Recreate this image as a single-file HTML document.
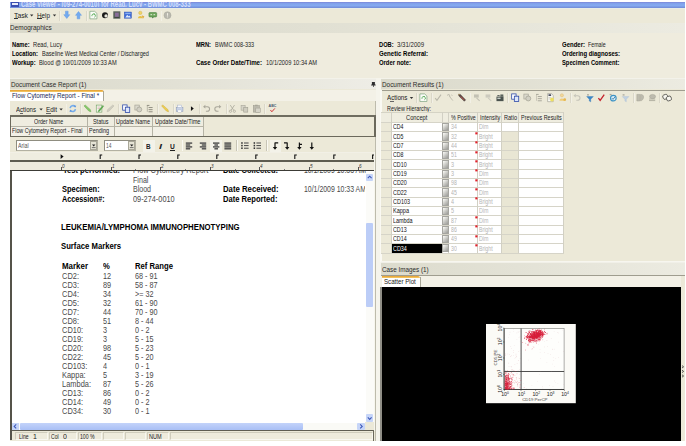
<!DOCTYPE html>
<html><head><meta charset="utf-8"><title>Case Viewer</title>
<style>
html,body{margin:0;padding:0;background:#fff;}
body{width:686px;height:446px;position:relative;overflow:hidden;font-family:"Liberation Sans", sans-serif;}
#app div{position:absolute;box-sizing:border-box;}
#app svg{position:absolute;overflow:visible;}
.t{position:absolute;white-space:nowrap;transform-origin:0 50%;display:block;}
</style></head><body><div id="app">
<div style="left:10px;top:2px;width:675px;height:438.6px;background:#ECE9D8;"></div>
<div style="left:10px;top:2px;width:675px;height:6px;background:linear-gradient(#7A86D8 0%,#82A4EC 28%,#84AAF0 62%,#7089D6 100%);"></div>
<div style="left:10px;top:2px;width:675px;height:5.4px;overflow:hidden;background:transparent">
<span class="t" style="left:11px;top:-3px;font-size:8.4px;line-height:10px;font-weight:bold;color:#D4DEFA;transform:scaleX(0.713)">Case Viewer - [09-274-0010] for Read, Lucy - BWMC 008-333</span></div>
<div style="left:11px;top:2px;width:8px;height:5px;background:#3A4FB0;"></div>
<div style="left:12px;top:3px;width:6px;height:2px;background:#E8ECFA;"></div>
<div style="left:10px;top:8px;width:675px;height:1px;background:#E9EDE4;"></div>
<span class="t" id="t0" style="left:14.00px;top:11.00px;font-size:7.6px;line-height:9.12px;color:#222;transform:scaleX(0.8969);">Task</span>
<span class="t" id="t1" style="left:37.40px;top:11.00px;font-size:7.6px;line-height:9.12px;color:#222;transform:scaleX(0.8328);">Help</span>
<div style="left:14px;top:18.3px;width:4px;height:0.8px;background:#333;"></div>
<div style="left:37.4px;top:18.3px;width:4.5px;height:0.8px;background:#333;"></div>
<svg style="left:0;top:0" width="686" height="30"><path d="M30 14.6h3.4l-1.7 2z M52.8 14.6h3.4l-1.7 2z" fill="#333"/></svg>
<div style="left:59.4px;top:10.5px;width:1px;height:10px;background:#DBD8C9;"></div>
<div style="left:60.199999999999996px;top:10.5px;width:1px;height:10px;background:#F2F0E6;"></div>
<div style="left:85.8px;top:10.5px;width:1px;height:10px;background:#DBD8C9;"></div>
<div style="left:86.6px;top:10.5px;width:1px;height:10px;background:#F2F0E6;"></div>
<div style="left:160.6px;top:10.5px;width:1px;height:10px;background:#DBD8C9;"></div>
<div style="left:161.4px;top:10.5px;width:1px;height:10px;background:#F2F0E6;"></div>
<div style="left:10px;top:23px;width:675px;height:9.6px;background:linear-gradient(90deg,#DAD9CB 0%,#E1E0D3 45%,#ECEBE1 100%);"></div>
<span class="t" id="t2" style="left:10.40px;top:23.00px;font-size:7.8px;line-height:9.36px;color:#2a2a2a;transform:scaleX(0.8282);">Demographics</span>
<div style="left:10px;top:32.6px;width:675px;height:45.6px;background:#EFECDE;"></div>
<span class="t" id="t3" style="left:12.40px;top:41.00px;font-size:6.7px;line-height:8.04px;color:#000;font-weight:bold;transform:scaleX(0.8614);">Name:</span>
<span class="t" id="t4" style="left:33.00px;top:41.00px;font-size:6.7px;line-height:8.04px;color:#222;transform:scaleX(0.8577);">Read, Lucy</span>
<span class="t" id="t5" style="left:12.40px;top:50.00px;font-size:6.7px;line-height:8.04px;color:#000;font-weight:bold;transform:scaleX(0.8648);">Location:</span>
<span class="t" id="t6" style="left:42.00px;top:50.00px;font-size:6.7px;line-height:8.04px;color:#222;transform:scaleX(0.8296);">Baseline West Medical Center / Discharged</span>
<span class="t" id="t7" style="left:12.40px;top:59.00px;font-size:6.7px;line-height:8.04px;color:#000;font-weight:bold;transform:scaleX(0.8749);">Workup:</span>
<span class="t" id="t8" style="left:39.40px;top:59.00px;font-size:6.7px;line-height:8.04px;color:#222;transform:scaleX(0.8517);">Blood @ 10/01/2009 10:33 AM</span>
<span class="t" id="t9" style="left:196.00px;top:41.00px;font-size:6.7px;line-height:8.04px;color:#000;font-weight:bold;transform:scaleX(0.8595);">MRN:</span>
<span class="t" id="t10" style="left:215.00px;top:41.00px;font-size:6.7px;line-height:8.04px;color:#222;transform:scaleX(0.8205);">BWMC 008-333</span>
<span class="t" id="t11" style="left:196.00px;top:59.00px;font-size:6.7px;line-height:8.04px;color:#000;font-weight:bold;transform:scaleX(0.9178);">Case Order Date/Time:</span>
<span class="t" id="t12" style="left:266.00px;top:59.00px;font-size:6.7px;line-height:8.04px;color:#222;transform:scaleX(0.8526);">10/1/2009 10:34 AM</span>
<span class="t" id="t13" style="left:379.00px;top:41.00px;font-size:6.7px;line-height:8.04px;color:#000;font-weight:bold;transform:scaleX(0.8550);">DOB:</span>
<span class="t" id="t14" style="left:397.00px;top:41.00px;font-size:6.7px;line-height:8.04px;color:#222;transform:scaleX(0.9080);">3/31/2009</span>
<span class="t" id="t15" style="left:379.00px;top:50.00px;font-size:6.7px;line-height:8.04px;color:#000;font-weight:bold;transform:scaleX(0.9099);">Genetic Referral:</span>
<span class="t" id="t16" style="left:379.00px;top:59.00px;font-size:6.7px;line-height:8.04px;color:#000;font-weight:bold;transform:scaleX(0.8795);">Order note:</span>
<span class="t" id="t17" style="left:562.00px;top:41.00px;font-size:6.7px;line-height:8.04px;color:#000;font-weight:bold;transform:scaleX(0.8979);">Gender:</span>
<span class="t" id="t18" style="left:588.00px;top:41.00px;font-size:6.7px;line-height:8.04px;color:#222;transform:scaleX(0.7896);">Female</span>
<span class="t" id="t19" style="left:562.00px;top:50.00px;font-size:6.7px;line-height:8.04px;color:#000;font-weight:bold;transform:scaleX(0.8877);">Ordering diagnoses:</span>
<span class="t" id="t20" style="left:562.00px;top:59.00px;font-size:6.7px;line-height:8.04px;color:#000;font-weight:bold;transform:scaleX(0.8636);">Specimen Comment:</span>
<div style="left:10px;top:78.4px;width:367px;height:11px;background:linear-gradient(90deg,#DAD9CB 0%,#E2E1D5 45%,#EEEDE6 100%);"></div>
<div style="left:10px;top:78.4px;width:367px;height:0.9px;background:#F3F2EA;"></div>
<span class="t" id="t21" style="left:10.60px;top:80.00px;font-size:7.8px;line-height:9.36px;color:#2a2a2a;transform:scaleX(0.8101);">Document Case Report (1)</span>
<svg style="left:370px;top:80px" width="8" height="9"><path d="M1.9 2.1h3v2.5h-3z M1.2 4.6h4.4v0.8H1.2z M3.05 5.4h0.7v1.5h-0.7z" fill="#2E2E2E"/></svg>
<div style="left:10px;top:89.7px;width:367px;height:1.3px;background:#A9A798;"></div>
<div style="left:10px;top:90px;width:367px;height:11px;background:#F3F1E7;"></div>
<div style="left:10px;top:90px;width:93.6px;height:11.4px;background:#FFFFFF;"></div>
<div style="left:10px;top:89.5px;width:93.6px;height:2.4px;background:linear-gradient(#E39A2C,#F6CF6E);border-radius:0 2px 0 0;"></div>
<div style="left:103.4px;top:90.5px;width:1px;height:10.5px;background:#A9A798;"></div>
<div style="left:103.6px;top:100.6px;width:273px;height:1px;background:#C5C3B4;"></div>
<span class="t" id="t22" style="left:12.00px;top:91.00px;font-size:7.5px;line-height:9.0px;color:#1d2a55;transform:scaleX(0.8325);">Flow Cytometry Report - Final *</span>
<div style="left:10px;top:101.4px;width:366px;height:14px;background:#ECE9D8;"></div>
<div style="left:375.4px;top:101px;width:1px;height:339.6px;background:#BDBBAC;"></div>
<span class="t" id="t23" style="left:16.00px;top:105.00px;font-size:7.6px;line-height:9.12px;color:#222;transform:scaleX(0.8038);">Actions</span>
<span class="t" id="t24" style="left:46.40px;top:105.00px;font-size:7.6px;line-height:9.12px;color:#222;transform:scaleX(0.8409);">Edit</span>
<div style="left:19.6px;top:112.7px;width:3.4px;height:0.6px;background:#666;"></div>
<div style="left:46.4px;top:112.7px;width:4.2px;height:0.6px;background:#666;"></div>
<svg style="left:0;top:0" width="686" height="120"><path d="M39.4 108.4h3.4l-1.7 2z M59.4 108.4h3.4l-1.7 2z" fill="#333"/></svg>
<div style="left:65.6px;top:104px;width:1px;height:10px;background:#DBD8C9;"></div>
<div style="left:66.39999999999999px;top:104px;width:1px;height:10px;background:#F2F0E6;"></div>
<div style="left:80px;top:104px;width:1px;height:10px;background:#DBD8C9;"></div>
<div style="left:80.8px;top:104px;width:1px;height:10px;background:#F2F0E6;"></div>
<div style="left:118px;top:104px;width:1px;height:10px;background:#DBD8C9;"></div>
<div style="left:118.8px;top:104px;width:1px;height:10px;background:#F2F0E6;"></div>
<div style="left:157px;top:104px;width:1px;height:10px;background:#DBD8C9;"></div>
<div style="left:157.8px;top:104px;width:1px;height:10px;background:#F2F0E6;"></div>
<div style="left:173px;top:104px;width:1px;height:10px;background:#DBD8C9;"></div>
<div style="left:173.8px;top:104px;width:1px;height:10px;background:#F2F0E6;"></div>
<div style="left:199.4px;top:104px;width:1px;height:10px;background:#DBD8C9;"></div>
<div style="left:200.20000000000002px;top:104px;width:1px;height:10px;background:#F2F0E6;"></div>
<div style="left:226px;top:104px;width:1px;height:10px;background:#DBD8C9;"></div>
<div style="left:226.8px;top:104px;width:1px;height:10px;background:#F2F0E6;"></div>
<div style="left:264px;top:104px;width:1px;height:10px;background:#DBD8C9;"></div>
<div style="left:264.8px;top:104px;width:1px;height:10px;background:#F2F0E6;"></div>
<div style="left:10px;top:115.6px;width:365.6px;height:21.2px;background:#ECE9D8;"></div>
<div style="left:10px;top:115.3px;width:365.6px;height:1.3px;background:#6F6D60;"></div>
<div style="left:10px;top:135.6px;width:365.6px;height:1.6px;background:#6B695C;"></div>
<div style="left:10px;top:115.6px;width:1.4px;height:21px;background:#6B695C;"></div>
<div style="left:374.4px;top:115.6px;width:1.4px;height:21px;background:#6B695C;"></div>
<div style="left:11.2px;top:116.8px;width:191.6px;height:9.4px;background:#EFEDE0;"></div>
<div style="left:11.2px;top:126.6px;width:191.6px;height:9.0px;background:#F2F0E6;"></div>
<div style="left:11.2px;top:126.2px;width:191.6px;height:1px;background:#B5B3A5;"></div>
<div style="left:87.4px;top:116.8px;width:1px;height:18.8px;background:#B5B3A5;"></div>
<div style="left:114.4px;top:116.8px;width:1px;height:18.8px;background:#B5B3A5;"></div>
<div style="left:152.4px;top:116.8px;width:1px;height:18.8px;background:#B5B3A5;"></div>
<div style="left:202.6px;top:116.8px;width:1px;height:18.8px;background:#B5B3A5;"></div>
<span class="t" id="t25" style="left:34.40px;top:118.00px;font-size:7.2px;line-height:8.64px;color:#222;transform:scaleX(0.7391);">Order Name</span>
<span class="t" id="t26" style="left:93.10px;top:118.00px;font-size:7.2px;line-height:8.64px;color:#222;transform:scaleX(0.7560);">Status</span>
<span class="t" id="t27" style="left:116.40px;top:118.00px;font-size:7.2px;line-height:8.64px;color:#222;transform:scaleX(0.7672);">Update Name</span>
<span class="t" id="t28" style="left:154.70px;top:118.00px;font-size:7.2px;line-height:8.64px;color:#222;transform:scaleX(0.7827);">Update Date/Time</span>
<span class="t" id="t29" style="left:12.00px;top:127.00px;font-size:7.2px;line-height:8.64px;color:#222;transform:scaleX(0.7382);">Flow Cytometry Report - Final</span>
<span class="t" id="t30" style="left:89.00px;top:127.00px;font-size:7.2px;line-height:8.64px;color:#222;transform:scaleX(0.7586);">Pending</span>
<div style="left:10px;top:137.2px;width:365.4px;height:15px;background:#ECE9D8;"></div>
<div style="left:16.4px;top:140.4px;width:81.4px;height:10.4px;background:#FFFFFF;border:1px solid #B3B1A2;border-top-color:#8F8D80;border-left-color:#8F8D80;"></div>
<div style="left:104.4px;top:140.4px;width:31.8px;height:10.4px;background:#FFFFFF;border:1px solid #B3B1A2;border-top-color:#8F8D80;border-left-color:#8F8D80;"></div>
<span class="t" id="t31" style="left:18.40px;top:142.00px;font-size:7.2px;line-height:8.64px;color:#555;transform:scaleX(0.7373);">Arial</span>
<span class="t" id="t32" style="left:106.20px;top:142.00px;font-size:7.2px;line-height:8.64px;color:#555;transform:scaleX(0.6757);">14</span>
<div style="left:89.6px;top:141.4px;width:7.2px;height:8.4px;background:#E6E4D6;border:0.6px solid #A9A798;"></div>
<svg style="left:89.6px;top:141.4px" width="8" height="9"><path d="M2 3.4h3.4l-1.7 2.2z" fill="#222"/><path d="M1.8 6.6h3.8" stroke="#444" stroke-width="0.7"/></svg>
<div style="left:128.2px;top:141.4px;width:7.2px;height:8.4px;background:#E6E4D6;border:0.6px solid #A9A798;"></div>
<svg style="left:128.2px;top:141.4px" width="8" height="9"><path d="M2 3.4h3.4l-1.7 2.2z" fill="#222"/><path d="M1.8 6.6h3.8" stroke="#444" stroke-width="0.7"/></svg>
<div style="left:143px;top:139.6px;width:11.6px;height:12px;background:#F3F2E9;"></div>
<div style="left:210.4px;top:139.6px;width:11.6px;height:12px;background:#F3F2E9;"></div>
<div style="left:270px;top:139.6px;width:11.4px;height:12px;background:#F3F2E9;"></div>
<span class="t" id="t33" style="left:145.80px;top:143.00px;font-size:7.4px;line-height:8.88px;color:#222;font-weight:bold;transform:scaleX(0.8617);">B</span>
<span class="t" id="t34" style="left:159.20px;top:142.00px;font-size:7.6px;line-height:9.12px;color:#222;font-weight:bold;font-style:italic;transform:scaleX(1.4132);">I</span>
<span class="t" id="t35" style="left:170.20px;top:143.00px;font-size:7.2px;line-height:8.64px;color:#222;font-weight:bold;transform:scaleX(0.9234);">U</span>
<div style="left:170.0px;top:149.6px;width:5.2px;height:0.8px;background:#222;"></div>
<div style="left:181.6px;top:140.4px;width:1px;height:10.4px;background:#C8C5B6;"></div>
<div style="left:182.4px;top:140.4px;width:1px;height:10.4px;background:#FAF9F2;"></div>
<div style="left:236px;top:140.4px;width:1px;height:10.4px;background:#C8C5B6;"></div>
<div style="left:236.8px;top:140.4px;width:1px;height:10.4px;background:#FAF9F2;"></div>
<div style="left:266px;top:140.4px;width:1px;height:10.4px;background:#C8C5B6;"></div>
<div style="left:266.8px;top:140.4px;width:1px;height:10.4px;background:#FAF9F2;"></div>
<svg style="left:0;top:0" width="686" height="160"><rect x="185.80" y="142.40" width="6.4" height="1.4" fill="#4A4A4A"/><rect x="185.80" y="144.30" width="4.4" height="1.4" fill="#4A4A4A"/><rect x="185.80" y="146.20" width="6.4" height="1.4" fill="#4A4A4A"/><rect x="185.80" y="148.10" width="4.4" height="1.4" fill="#4A4A4A"/></svg>
<svg style="left:0;top:0" width="686" height="160"><rect x="199.80" y="142.40" width="6.4" height="1.4" fill="#4A4A4A"/><rect x="201.80" y="144.30" width="4.4" height="1.4" fill="#4A4A4A"/><rect x="199.80" y="146.20" width="6.4" height="1.4" fill="#4A4A4A"/><rect x="201.80" y="148.10" width="4.4" height="1.4" fill="#4A4A4A"/></svg>
<svg style="left:0;top:0" width="686" height="160"><rect x="213.00" y="142.40" width="6.4" height="1.4" fill="#4A4A4A"/><rect x="214.40" y="144.30" width="3.6" height="1.4" fill="#4A4A4A"/><rect x="213.00" y="146.20" width="6.4" height="1.4" fill="#4A4A4A"/><rect x="214.40" y="148.10" width="3.6" height="1.4" fill="#4A4A4A"/></svg>
<svg style="left:0;top:0" width="686" height="160"><rect x="224.40" y="142.40" width="6.8" height="1.4" fill="#4A4A4A"/><rect x="224.40" y="144.30" width="6.8" height="1.4" fill="#4A4A4A"/><rect x="224.40" y="146.20" width="6.8" height="1.4" fill="#4A4A4A"/><rect x="224.40" y="148.10" width="6.8" height="1.4" fill="#4A4A4A"/></svg>
<svg style="left:0;top:0" width="686" height="160"><rect x="244.00" y="142.50" width="4.6" height="1.0" fill="#444"/><rect x="241.20" y="142.20" width="1.5" height="1.6" fill="#333"/><rect x="244.00" y="145.10" width="4.6" height="1.0" fill="#444"/><rect x="241.20" y="144.80" width="1.5" height="1.6" fill="#333"/><rect x="244.00" y="147.70" width="4.6" height="1.0" fill="#444"/><rect x="241.20" y="147.40" width="1.5" height="1.6" fill="#333"/></svg>
<svg style="left:0;top:0" width="686" height="160"><rect x="256.40" y="142.50" width="4.6" height="1.0" fill="#444"/><rect x="253.60" y="142.20" width="1.5" height="1.6" fill="#333"/><rect x="256.40" y="145.10" width="4.6" height="1.0" fill="#444"/><rect x="253.60" y="144.80" width="1.5" height="1.6" fill="#333"/><rect x="256.40" y="147.70" width="4.6" height="1.0" fill="#444"/><rect x="253.60" y="147.40" width="1.5" height="1.6" fill="#333"/></svg>
<svg style="left:0;top:0" width="686" height="160"><path d="M275.0 142.6v5 M275.0 142.8h3.2" stroke="#111" stroke-width="1.2" fill="none"/><path d="M272.8 147h4.4l-2.2 2.8z" fill="#111"/></svg>
<svg style="left:0;top:0" width="686" height="160"><path d="M287.2 142.6v5 M287.2 142.8h-3.2" stroke="#111" stroke-width="1.2" fill="none"/><path d="M285.0 147h4.4l-2.2 2.8z" fill="#111"/></svg>
<svg style="left:0;top:0" width="686" height="160"><path d="M299.4 142.4v5.4 M299.4 144.4h2.6" stroke="#111" stroke-width="1.2" fill="none"/><path d="M297.2 147h4.4l-2.2 2.8z" fill="#111"/></svg>
<svg style="left:0;top:0" width="686" height="160"><path d="M311.8 142.4v5.4" stroke="#111" stroke-width="1.2" fill="none"/><path d="M309.6 147h4.4l-2.2 2.8z" fill="#111"/></svg>
<div style="left:10px;top:152.2px;width:364px;height:8.4px;background:#EFEDE0;"></div>
<div style="left:10px;top:152.2px;width:364px;height:1px;background:#F2F0E6;"></div>
<div style="left:10px;top:160.3px;width:364px;height:1.3px;background:#5E5C50;"></div>
<div style="left:10px;top:161.6px;width:364px;height:8.6px;background:#EEEBDD;"></div>
<svg style="left:0;top:0" width="686" height="175"><path d="M60.6 154.2l3 2.4-3 2.4z" fill="#111"/><path d="M100.19999999999999 154.6v4.4 M100.19999999999999 155h2" stroke="#111" stroke-width="1.1" fill="none"/><path d="M139.0 154.6v4.4 M139.0 155h2" stroke="#111" stroke-width="1.1" fill="none"/><path d="M177.79999999999998 154.6v4.4 M177.79999999999998 155h2" stroke="#111" stroke-width="1.1" fill="none"/><path d="M216.79999999999998 154.6v4.4 M216.79999999999998 155h2" stroke="#111" stroke-width="1.1" fill="none"/><path d="M255.79999999999998 154.6v4.4 M255.79999999999998 155h2" stroke="#111" stroke-width="1.1" fill="none"/><path d="M294.8 154.6v4.4 M294.8 155h2" stroke="#111" stroke-width="1.1" fill="none"/><path d="M333.8 154.6v4.4 M333.8 155h2" stroke="#111" stroke-width="1.1" fill="none"/><path d="M372.6 154.6v4.4 M372.6 155h2" stroke="#111" stroke-width="1.1" fill="none"/></svg>
<span class="t" id="t36" style="left:61.60px;top:164.00px;font-size:4.6px;line-height:5.52px;color:#333;font-style:italic;transform:scaleX(0.9990);">0</span>
<div style="left:60.6px;top:167.4px;width:0.7px;height:2.4px;background:#555;"></div>
<div style="left:85.2px;top:168.6px;width:0.6px;height:1.4px;background:#777;"></div>
<span class="t" id="t37" style="left:111.60px;top:164.00px;font-size:4.6px;line-height:5.52px;color:#333;font-style:italic;transform:scaleX(0.9990);">1</span>
<div style="left:110.6px;top:167.4px;width:0.7px;height:2.4px;background:#555;"></div>
<div style="left:135.2px;top:168.6px;width:0.6px;height:1.4px;background:#777;"></div>
<span class="t" id="t38" style="left:161.20px;top:164.00px;font-size:4.6px;line-height:5.52px;color:#333;font-style:italic;transform:scaleX(0.9990);">2</span>
<div style="left:160.2px;top:167.4px;width:0.7px;height:2.4px;background:#555;"></div>
<div style="left:184.79999999999998px;top:168.6px;width:0.6px;height:1.4px;background:#777;"></div>
<span class="t" id="t39" style="left:211.00px;top:164.00px;font-size:4.6px;line-height:5.52px;color:#333;font-style:italic;transform:scaleX(0.9990);">3</span>
<div style="left:210.0px;top:167.4px;width:0.7px;height:2.4px;background:#555;"></div>
<div style="left:234.6px;top:168.6px;width:0.6px;height:1.4px;background:#777;"></div>
<span class="t" id="t40" style="left:260.20px;top:164.00px;font-size:4.6px;line-height:5.52px;color:#333;font-style:italic;transform:scaleX(0.9990);">4</span>
<div style="left:259.20000000000005px;top:167.4px;width:0.7px;height:2.4px;background:#555;"></div>
<div style="left:283.8px;top:168.6px;width:0.6px;height:1.4px;background:#777;"></div>
<span class="t" id="t41" style="left:309.60px;top:164.00px;font-size:4.6px;line-height:5.52px;color:#333;font-style:italic;transform:scaleX(0.9990);">5</span>
<div style="left:308.6px;top:167.4px;width:0.7px;height:2.4px;background:#555;"></div>
<div style="left:333.2px;top:168.6px;width:0.6px;height:1.4px;background:#777;"></div>
<span class="t" id="t42" style="left:359.20px;top:164.00px;font-size:4.6px;line-height:5.52px;color:#333;font-style:italic;transform:scaleX(0.9990);">6</span>
<div style="left:358.20000000000005px;top:167.4px;width:0.7px;height:2.4px;background:#555;"></div>
<div style="left:10px;top:170.8px;width:364px;height:252px;background:#FFFFFF;"></div>
<div style="left:10px;top:169.9px;width:364px;height:1.4px;background:#3C3B36;"></div>
<div style="left:10px;top:170.6px;width:1.7px;height:270px;background:#55534A;"></div>
<div style="left:12px;top:171px;width:354px;height:4.4px;overflow:hidden;background:transparent">
<span class="t" style="left:51px;top:-5px;font-size:8.2px;line-height:9.84px;font-weight:bold;color:#000;transform:scaleX(0.925)">Test performed:</span>
<span class="t" style="left:121px;top:-5px;font-size:8.2px;line-height:9.84px;color:#444;transform:scaleX(0.9)">Flow Cytometry Report -</span>
<span class="t" style="left:211px;top:-5px;font-size:8.2px;line-height:9.84px;font-weight:bold;color:#000;transform:scaleX(0.925)">Date Collected:</span>
<span class="t" style="left:291.8px;top:-5px;font-size:8.2px;line-height:9.84px;color:#444;transform:scaleX(0.845)">10/1/2009 10:33 AM</span>
</div>
<span class="t" id="t43" style="left:133.00px;top:176.00px;font-size:8.2px;line-height:9.84px;color:#4a4a4a;transform:scaleX(0.8685);">Final</span>
<span class="t" id="t44" style="left:62.40px;top:185.00px;font-size:8.2px;line-height:9.84px;color:#000;font-weight:bold;transform:scaleX(0.9090);">Specimen:</span>
<span class="t" id="t45" style="left:133.00px;top:185.00px;font-size:8.2px;line-height:9.84px;color:#4a4a4a;transform:scaleX(0.8599);">Blood</span>
<span class="t" id="t46" style="left:223.00px;top:185.00px;font-size:8.2px;line-height:9.84px;color:#000;font-weight:bold;transform:scaleX(0.9478);">Date Received:</span>
<div style="left:300px;top:184px;width:65.2px;height:12px;overflow:hidden;">
<span class="t" style="left:3.8px;top:1px;font-size:8.2px;line-height:9.84px;color:#4a4a4a;transform:scaleX(0.845)">10/1/2009 10:33 AM</span></div>
<span class="t" id="t47" style="left:62.40px;top:195.00px;font-size:8.2px;line-height:9.84px;color:#000;font-weight:bold;transform:scaleX(0.8838);">Accession#:</span>
<span class="t" id="t48" style="left:133.00px;top:195.00px;font-size:8.2px;line-height:9.84px;color:#4a4a4a;transform:scaleX(0.8967);">09-274-0010</span>
<span class="t" id="t49" style="left:223.00px;top:195.00px;font-size:8.2px;line-height:9.84px;color:#000;font-weight:bold;transform:scaleX(0.9279);">Date Reported:</span>
<span class="t" id="t50" style="left:61.00px;top:223.00px;font-size:8.2px;line-height:9.84px;color:#000;font-weight:bold;transform:scaleX(0.9513);">LEUKEMIA/LYMPHOMA IMMUNOPHENOTYPING</span>
<span class="t" id="t51" style="left:61.00px;top:242.00px;font-size:8.2px;line-height:9.84px;color:#000;font-weight:bold;transform:scaleX(0.9426);">Surface Markers</span>
<span class="t" id="t52" style="left:62.00px;top:262.00px;font-size:8.2px;line-height:9.84px;color:#000;font-weight:bold;transform:scaleX(0.9690);">Marker</span>
<span class="t" id="t53" style="left:102.60px;top:262.00px;font-size:8.2px;line-height:9.84px;color:#000;font-weight:bold;transform:scaleX(0.9348);">%</span>
<span class="t" id="t54" style="left:135.00px;top:262.00px;font-size:8.2px;line-height:9.84px;color:#000;font-weight:bold;transform:scaleX(0.9392);">Ref Range</span>
<span class="t" id="t55" style="left:62.00px;top:272.00px;font-size:8.2px;line-height:9.84px;color:#4a4a4a;transform:scaleX(0.9100);">CD2:</span>
<span class="t" id="t56" style="left:103.00px;top:272.00px;font-size:8.2px;line-height:9.84px;color:#4a4a4a;transform:scaleX(0.8900);">12</span>
<span class="t" id="t57" style="left:135.00px;top:272.00px;font-size:8.2px;line-height:9.84px;color:#4a4a4a;transform:scaleX(0.8850);">68 - 91</span>
<span class="t" id="t58" style="left:62.00px;top:281.00px;font-size:8.2px;line-height:9.84px;color:#4a4a4a;transform:scaleX(0.9100);">CD3:</span>
<span class="t" id="t59" style="left:103.00px;top:281.00px;font-size:8.2px;line-height:9.84px;color:#4a4a4a;transform:scaleX(0.8900);">89</span>
<span class="t" id="t60" style="left:135.00px;top:281.00px;font-size:8.2px;line-height:9.84px;color:#4a4a4a;transform:scaleX(0.8850);">58 - 87</span>
<span class="t" id="t61" style="left:62.00px;top:290.00px;font-size:8.2px;line-height:9.84px;color:#4a4a4a;transform:scaleX(0.9100);">CD4:</span>
<span class="t" id="t62" style="left:103.00px;top:290.00px;font-size:8.2px;line-height:9.84px;color:#4a4a4a;transform:scaleX(0.8900);">34</span>
<span class="t" id="t63" style="left:135.00px;top:290.00px;font-size:8.2px;line-height:9.84px;color:#4a4a4a;transform:scaleX(0.8850);">&gt;= 32</span>
<span class="t" id="t64" style="left:62.00px;top:299.00px;font-size:8.2px;line-height:9.84px;color:#4a4a4a;transform:scaleX(0.9100);">CD5:</span>
<span class="t" id="t65" style="left:103.00px;top:299.00px;font-size:8.2px;line-height:9.84px;color:#4a4a4a;transform:scaleX(0.8900);">32</span>
<span class="t" id="t66" style="left:135.00px;top:299.00px;font-size:8.2px;line-height:9.84px;color:#4a4a4a;transform:scaleX(0.8850);">61 - 90</span>
<span class="t" id="t67" style="left:62.00px;top:308.00px;font-size:8.2px;line-height:9.84px;color:#4a4a4a;transform:scaleX(0.9100);">CD7:</span>
<span class="t" id="t68" style="left:103.00px;top:308.00px;font-size:8.2px;line-height:9.84px;color:#4a4a4a;transform:scaleX(0.8900);">44</span>
<span class="t" id="t69" style="left:135.00px;top:308.00px;font-size:8.2px;line-height:9.84px;color:#4a4a4a;transform:scaleX(0.8850);">70 - 90</span>
<span class="t" id="t70" style="left:62.00px;top:317.00px;font-size:8.2px;line-height:9.84px;color:#4a4a4a;transform:scaleX(0.9100);">CD8:</span>
<span class="t" id="t71" style="left:103.00px;top:317.00px;font-size:8.2px;line-height:9.84px;color:#4a4a4a;transform:scaleX(0.8900);">51</span>
<span class="t" id="t72" style="left:135.00px;top:317.00px;font-size:8.2px;line-height:9.84px;color:#4a4a4a;transform:scaleX(0.8850);">8 - 44</span>
<span class="t" id="t73" style="left:62.00px;top:326.00px;font-size:8.2px;line-height:9.84px;color:#4a4a4a;transform:scaleX(0.9100);">CD10:</span>
<span class="t" id="t74" style="left:103.00px;top:326.00px;font-size:8.2px;line-height:9.84px;color:#4a4a4a;transform:scaleX(0.8900);">3</span>
<span class="t" id="t75" style="left:135.00px;top:326.00px;font-size:8.2px;line-height:9.84px;color:#4a4a4a;transform:scaleX(0.8850);">0 - 2</span>
<span class="t" id="t76" style="left:62.00px;top:335.00px;font-size:8.2px;line-height:9.84px;color:#4a4a4a;transform:scaleX(0.9100);">CD19:</span>
<span class="t" id="t77" style="left:103.00px;top:335.00px;font-size:8.2px;line-height:9.84px;color:#4a4a4a;transform:scaleX(0.8900);">3</span>
<span class="t" id="t78" style="left:135.00px;top:335.00px;font-size:8.2px;line-height:9.84px;color:#4a4a4a;transform:scaleX(0.8850);">5 - 15</span>
<span class="t" id="t79" style="left:62.00px;top:344.00px;font-size:8.2px;line-height:9.84px;color:#4a4a4a;transform:scaleX(0.9100);">CD20:</span>
<span class="t" id="t80" style="left:103.00px;top:344.00px;font-size:8.2px;line-height:9.84px;color:#4a4a4a;transform:scaleX(0.8900);">98</span>
<span class="t" id="t81" style="left:135.00px;top:344.00px;font-size:8.2px;line-height:9.84px;color:#4a4a4a;transform:scaleX(0.8850);">5 - 23</span>
<span class="t" id="t82" style="left:62.00px;top:353.00px;font-size:8.2px;line-height:9.84px;color:#4a4a4a;transform:scaleX(0.9100);">CD22:</span>
<span class="t" id="t83" style="left:103.00px;top:353.00px;font-size:8.2px;line-height:9.84px;color:#4a4a4a;transform:scaleX(0.8900);">45</span>
<span class="t" id="t84" style="left:135.00px;top:353.00px;font-size:8.2px;line-height:9.84px;color:#4a4a4a;transform:scaleX(0.8850);">5 - 20</span>
<span class="t" id="t85" style="left:62.00px;top:362.00px;font-size:8.2px;line-height:9.84px;color:#4a4a4a;transform:scaleX(0.9100);">CD103:</span>
<span class="t" id="t86" style="left:103.00px;top:362.00px;font-size:8.2px;line-height:9.84px;color:#4a4a4a;transform:scaleX(0.8900);">4</span>
<span class="t" id="t87" style="left:135.00px;top:362.00px;font-size:8.2px;line-height:9.84px;color:#4a4a4a;transform:scaleX(0.8850);">0 - 1</span>
<span class="t" id="t88" style="left:62.00px;top:371.00px;font-size:8.2px;line-height:9.84px;color:#4a4a4a;transform:scaleX(0.9100);">Kappa:</span>
<span class="t" id="t89" style="left:103.00px;top:371.00px;font-size:8.2px;line-height:9.84px;color:#4a4a4a;transform:scaleX(0.8900);">5</span>
<span class="t" id="t90" style="left:135.00px;top:371.00px;font-size:8.2px;line-height:9.84px;color:#4a4a4a;transform:scaleX(0.8850);">3 - 19</span>
<span class="t" id="t91" style="left:62.00px;top:380.00px;font-size:8.2px;line-height:9.84px;color:#4a4a4a;transform:scaleX(0.9100);">Lambda:</span>
<span class="t" id="t92" style="left:103.00px;top:380.00px;font-size:8.2px;line-height:9.84px;color:#4a4a4a;transform:scaleX(0.8900);">87</span>
<span class="t" id="t93" style="left:135.00px;top:380.00px;font-size:8.2px;line-height:9.84px;color:#4a4a4a;transform:scaleX(0.8850);">5 - 26</span>
<span class="t" id="t94" style="left:62.00px;top:389.00px;font-size:8.2px;line-height:9.84px;color:#4a4a4a;transform:scaleX(0.9100);">CD13:</span>
<span class="t" id="t95" style="left:103.00px;top:389.00px;font-size:8.2px;line-height:9.84px;color:#4a4a4a;transform:scaleX(0.8900);">86</span>
<span class="t" id="t96" style="left:135.00px;top:389.00px;font-size:8.2px;line-height:9.84px;color:#4a4a4a;transform:scaleX(0.8850);">0 - 2</span>
<span class="t" id="t97" style="left:62.00px;top:398.00px;font-size:8.2px;line-height:9.84px;color:#4a4a4a;transform:scaleX(0.9100);">CD14:</span>
<span class="t" id="t98" style="left:103.00px;top:398.00px;font-size:8.2px;line-height:9.84px;color:#4a4a4a;transform:scaleX(0.8900);">49</span>
<span class="t" id="t99" style="left:135.00px;top:398.00px;font-size:8.2px;line-height:9.84px;color:#4a4a4a;transform:scaleX(0.8850);">0 - 2</span>
<span class="t" id="t100" style="left:62.00px;top:407.00px;font-size:8.2px;line-height:9.84px;color:#4a4a4a;transform:scaleX(0.9100);">CD34:</span>
<span class="t" id="t101" style="left:103.00px;top:407.00px;font-size:8.2px;line-height:9.84px;color:#4a4a4a;transform:scaleX(0.8900);">30</span>
<span class="t" id="t102" style="left:135.00px;top:407.00px;font-size:8.2px;line-height:9.84px;color:#4a4a4a;transform:scaleX(0.8850);">0 - 1</span>
<div style="left:366px;top:172px;width:7.6px;height:251px;background:#FBFBF8;"></div>
<div style="left:366px;top:173.6px;width:7.4px;height:7px;background:#C6D5F8;border-radius:1px;"></div>
<div style="left:366px;top:223px;width:7.4px;height:84px;background:#BCCDF7;border-radius:1px;"></div>
<div style="left:366px;top:414.4px;width:7.4px;height:7.6px;background:#C6D5F8;border-radius:1px;"></div>
<svg style="left:0;top:0" width="686" height="446"><path d="M367.8 178.2l1.9-2 1.9 2 M367.8 417.4l1.9 2 1.9-2" stroke="#3D58B8" stroke-width="1.1" fill="none"/></svg>
<div style="left:11.6px;top:422.8px;width:354px;height:7.4px;background:#FAFAF6;"></div>
<div style="left:11.6px;top:422.8px;width:7px;height:7.4px;background:#C6D5F8;"></div>
<div style="left:19.6px;top:422.8px;width:283.4px;height:7.4px;background:linear-gradient(#C3D3FA,#A9BFF5);border-radius:1px;"></div>
<div style="left:357.4px;top:422.8px;width:7.6px;height:7.4px;background:#C6D5F8;border-radius:1px;"></div>
<svg style="left:0;top:0" width="686" height="446"><path d="M16.2 424.4l-2 2 2 2 M360.2 424.4l2 2-2 2" stroke="#3D58B8" stroke-width="1.1" fill="none"/></svg>
<div style="left:365.4px;top:422.4px;width:8.6px;height:8px;background:#ECE9D8;"></div>
<div style="left:373.6px;top:152px;width:1px;height:279px;background:#F7F6EE;"></div>
<div style="left:10px;top:430.4px;width:364.4px;height:10.2px;background:#ECE9D8;"></div>
<div style="left:10px;top:430.3px;width:364.4px;height:1.2px;background:#5F5D52;"></div>
<div style="left:372.8px;top:430.3px;width:1.2px;height:10.4px;background:#6B695C;"></div>
<div style="left:10px;top:430px;width:1.7px;height:10.4px;background:#55534A;"></div>
<div style="left:14.6px;top:432.2px;width:33px;height:7.8px;background:transparent;border:0.7px solid #CFCCBC;border-right-color:#F8F7F0;border-bottom-color:#F8F7F0;background:#EEEBDC;"></div>
<div style="left:48.6px;top:432.2px;width:28.6px;height:7.8px;background:transparent;border:0.7px solid #CFCCBC;border-right-color:#F8F7F0;border-bottom-color:#F8F7F0;background:#EEEBDC;"></div>
<div style="left:78.2px;top:432.2px;width:23.6px;height:7.8px;background:transparent;border:0.7px solid #CFCCBC;border-right-color:#F8F7F0;border-bottom-color:#F8F7F0;background:#EEEBDC;"></div>
<div style="left:102.8px;top:432.2px;width:21px;height:7.8px;background:transparent;border:0.7px solid #CFCCBC;border-right-color:#F8F7F0;border-bottom-color:#F8F7F0;background:#EEEBDC;"></div>
<div style="left:124.6px;top:432.2px;width:21.6px;height:7.8px;background:transparent;border:0.7px solid #CFCCBC;border-right-color:#F8F7F0;border-bottom-color:#F8F7F0;background:#EEEBDC;"></div>
<div style="left:147px;top:432.2px;width:22px;height:7.8px;background:transparent;border:0.7px solid #CFCCBC;border-right-color:#F8F7F0;border-bottom-color:#F8F7F0;background:#EEEBDC;"></div>
<div style="left:170px;top:432.2px;width:203px;height:7.8px;background:transparent;border:0.7px solid #CFCCBC;border-right-color:#F8F7F0;border-bottom-color:#F8F7F0;background:#EEEBDC;"></div>
<span class="t" id="t103" style="left:19.00px;top:433.00px;font-size:7px;line-height:8.4px;color:#222;transform:scaleX(0.7261);">Line</span>
<span class="t" id="t104" style="left:33.00px;top:433.00px;font-size:7px;line-height:8.4px;color:#222;transform:scaleX(0.9990);">1</span>
<span class="t" id="t105" style="left:51.00px;top:433.00px;font-size:7px;line-height:8.4px;color:#222;transform:scaleX(0.7235);">Col</span>
<span class="t" id="t106" style="left:62.60px;top:433.00px;font-size:7px;line-height:8.4px;color:#222;transform:scaleX(0.9990);">0</span>
<span class="t" id="t107" style="left:80.40px;top:433.00px;font-size:7px;line-height:8.4px;color:#222;transform:scaleX(0.7359);">100 %</span>
<span class="t" id="t108" style="left:149.20px;top:433.00px;font-size:7px;line-height:8.4px;color:#222;transform:scaleX(0.7906);">NUM</span>
<div style="left:376.4px;top:78.4px;width:4.2px;height:362.2px;background:#F5F4EC;"></div>
<div style="left:380.6px;top:78.4px;width:304.4px;height:11px;background:linear-gradient(90deg,#DAD9CB 0%,#E1E0D3 45%,#ECEBE1 100%);"></div>
<div style="left:380.6px;top:78.4px;width:304.4px;height:0.9px;background:#F3F2EA;"></div>
<span class="t" id="t109" style="left:382.40px;top:80.00px;font-size:7.8px;line-height:9.36px;color:#2a2a2a;transform:scaleX(0.8177);">Document Results (1)</span>
<div style="left:380.6px;top:89.6px;width:304.4px;height:1.1px;background:#9F9D8F;"></div>
<div style="left:380.6px;top:90.6px;width:304.4px;height:171px;background:#ECE9D8;"></div>
<div style="left:380.4px;top:90px;width:1.2px;height:171.6px;background:#FAF9F3;"></div>
<div style="left:380.6px;top:260.6px;width:304.4px;height:1px;background:#FAF9F3;"></div>
<span class="t" id="t110" style="left:386.60px;top:93.00px;font-size:7.6px;line-height:9.12px;color:#222;transform:scaleX(0.8199);">Actions</span>
<div style="left:390.2px;top:101.4px;width:3.4px;height:0.6px;background:#666;"></div>
<svg style="left:0;top:0" width="686" height="120"><path d="M409.8 97h3.4l-1.7 2z" fill="#333"/></svg>
<div style="left:416.4px;top:92.6px;width:1px;height:10.4px;background:#DBD8C9;"></div>
<div style="left:417.2px;top:92.6px;width:1px;height:10.4px;background:#F2F0E6;"></div>
<div style="left:430.7px;top:92.6px;width:1px;height:10.4px;background:#DBD8C9;"></div>
<div style="left:431.5px;top:92.6px;width:1px;height:10.4px;background:#F2F0E6;"></div>
<div style="left:469.6px;top:92.6px;width:1px;height:10.4px;background:#DBD8C9;"></div>
<div style="left:470.40000000000003px;top:92.6px;width:1px;height:10.4px;background:#F2F0E6;"></div>
<div style="left:507.4px;top:92.6px;width:1px;height:10.4px;background:#DBD8C9;"></div>
<div style="left:508.2px;top:92.6px;width:1px;height:10.4px;background:#F2F0E6;"></div>
<div style="left:570.2px;top:92.6px;width:1px;height:10.4px;background:#DBD8C9;"></div>
<div style="left:571.0px;top:92.6px;width:1px;height:10.4px;background:#F2F0E6;"></div>
<div style="left:632.8px;top:92.6px;width:1px;height:10.4px;background:#DBD8C9;"></div>
<div style="left:633.5999999999999px;top:92.6px;width:1px;height:10.4px;background:#F2F0E6;"></div>
<div style="left:659.4px;top:92.6px;width:1px;height:10.4px;background:#DBD8C9;"></div>
<div style="left:660.1999999999999px;top:92.6px;width:1px;height:10.4px;background:#F2F0E6;"></div>
<span class="t" id="t111" style="left:386.60px;top:105.00px;font-size:7.2px;line-height:8.64px;color:#222;transform:scaleX(0.7551);">Review Hierarchy:</span>
<div style="left:381.4px;top:112.4px;width:182.20000000000005px;height:140.79999999999998px;background:#FFFFFF;"></div>
<div style="left:381.4px;top:112.4px;width:182.20000000000005px;height:10.0px;background:#EFEDE0;"></div>
<div style="left:381.4px;top:122.4px;width:10px;height:130.6px;background:#ECE9D8;"></div>
<div style="left:501.6px;top:131.72857142857143px;width:17.0px;height:121.27142857142857px;background:#E9E6D4;"></div>
<div style="left:381.4px;top:112.4px;width:182.20000000000005px;height:1px;background:#D5D3C5;"></div>
<div style="left:381.4px;top:122.10000000000001px;width:182.20000000000005px;height:0.8px;background:#D6D4C8;"></div>
<div style="left:381.4px;top:131.42857142857142px;width:182.20000000000005px;height:0.8px;background:#D6D4C8;"></div>
<div style="left:381.4px;top:140.75714285714284px;width:182.20000000000005px;height:0.8px;background:#D6D4C8;"></div>
<div style="left:381.4px;top:150.0857142857143px;width:182.20000000000005px;height:0.8px;background:#D6D4C8;"></div>
<div style="left:381.4px;top:159.4142857142857px;width:182.20000000000005px;height:0.8px;background:#D6D4C8;"></div>
<div style="left:381.4px;top:168.74285714285713px;width:182.20000000000005px;height:0.8px;background:#D6D4C8;"></div>
<div style="left:381.4px;top:178.07142857142856px;width:182.20000000000005px;height:0.8px;background:#D6D4C8;"></div>
<div style="left:381.4px;top:187.39999999999998px;width:182.20000000000005px;height:0.8px;background:#D6D4C8;"></div>
<div style="left:381.4px;top:196.7285714285714px;width:182.20000000000005px;height:0.8px;background:#D6D4C8;"></div>
<div style="left:381.4px;top:206.05714285714282px;width:182.20000000000005px;height:0.8px;background:#D6D4C8;"></div>
<div style="left:381.4px;top:215.38571428571427px;width:182.20000000000005px;height:0.8px;background:#D6D4C8;"></div>
<div style="left:381.4px;top:224.7142857142857px;width:182.20000000000005px;height:0.8px;background:#D6D4C8;"></div>
<div style="left:381.4px;top:234.04285714285712px;width:182.20000000000005px;height:0.8px;background:#D6D4C8;"></div>
<div style="left:381.4px;top:243.37142857142857px;width:182.20000000000005px;height:0.8px;background:#D6D4C8;"></div>
<div style="left:381.4px;top:252.7px;width:182.20000000000005px;height:0.8px;background:#D6D4C8;"></div>
<div style="left:391.09999999999997px;top:112.4px;width:0.8px;height:140.6px;background:#D2D0C4;"></div>
<div style="left:441.7px;top:112.4px;width:0.8px;height:140.6px;background:#D2D0C4;"></div>
<div style="left:448.3px;top:112.4px;width:0.8px;height:140.6px;background:#D2D0C4;"></div>
<div style="left:477.09999999999997px;top:112.4px;width:0.8px;height:140.6px;background:#D2D0C4;"></div>
<div style="left:501.3px;top:112.4px;width:0.8px;height:140.6px;background:#D2D0C4;"></div>
<div style="left:518.3000000000001px;top:112.4px;width:0.8px;height:140.6px;background:#D2D0C4;"></div>
<div style="left:563.3000000000001px;top:112.4px;width:0.8px;height:140.6px;background:#D2D0C4;"></div>
<span class="t" id="t112" style="left:405.90px;top:114.00px;font-size:7.2px;line-height:8.64px;color:#222;transform:scaleX(0.7999);">Concept</span>
<span class="t" id="t113" style="left:451.00px;top:114.00px;font-size:7.2px;line-height:8.64px;color:#222;transform:scaleX(0.7397);">% Positive</span>
<span class="t" id="t114" style="left:480.00px;top:114.00px;font-size:7.2px;line-height:8.64px;color:#222;transform:scaleX(0.7550);">Intensity</span>
<span class="t" id="t115" style="left:504.00px;top:114.00px;font-size:7.2px;line-height:8.64px;color:#222;transform:scaleX(0.7754);">Ratio</span>
<span class="t" id="t116" style="left:521.00px;top:114.00px;font-size:7.2px;line-height:8.64px;color:#222;transform:scaleX(0.7572);">Previous Results</span>
<span class="t" id="t117" style="left:393.00px;top:123.00px;font-size:7.2px;line-height:8.64px;color:#111;transform:scaleX(0.7234);">CD4</span>
<div style="left:442.2px;top:123.10000000000001px;width:6.4px;height:8.128571428571428px;background:linear-gradient(135deg,#F4F4F0 10%,#C4C4C0 55%,#9A9A96);border:0.5px solid #A5A5A0;"></div>
<span class="t" id="t118" style="left:451.00px;top:123.00px;font-size:7.0px;line-height:8.4px;color:#B4B4B4;transform:scaleX(0.7446);">34</span>
<span class="t" id="t119" style="left:479.40px;top:123.00px;font-size:7.0px;line-height:8.4px;color:#B4B4B4;transform:scaleX(0.7556);">Dim</span>
<span class="t" id="t120" style="left:393.00px;top:133.00px;font-size:7.2px;line-height:8.64px;color:#111;transform:scaleX(0.7234);">CD5</span>
<div style="left:442.2px;top:132.42857142857142px;width:6.4px;height:8.128571428571428px;background:linear-gradient(135deg,#F4F4F0 10%,#C4C4C0 55%,#9A9A96);border:0.5px solid #A5A5A0;"></div>
<span class="t" id="t121" style="left:451.00px;top:133.00px;font-size:7.0px;line-height:8.4px;color:#B4B4B4;transform:scaleX(0.7446);">32</span>
<span class="t" id="t122" style="left:479.40px;top:133.00px;font-size:7.0px;line-height:8.4px;color:#B4B4B4;transform:scaleX(0.7440);">Bright</span>
<svg style="left:475.1px;top:131.9px" width="4" height="4"><path d="M0.3 0.3h2.2v2.1h-2.2z" fill="#E0202A"/></svg>
<span class="t" id="t123" style="left:393.00px;top:142.00px;font-size:7.2px;line-height:8.64px;color:#111;transform:scaleX(0.7234);">CD7</span>
<div style="left:442.2px;top:141.75714285714284px;width:6.4px;height:8.128571428571428px;background:linear-gradient(135deg,#F4F4F0 10%,#C4C4C0 55%,#9A9A96);border:0.5px solid #A5A5A0;"></div>
<span class="t" id="t124" style="left:451.00px;top:142.00px;font-size:7.0px;line-height:8.4px;color:#B4B4B4;transform:scaleX(0.7446);">44</span>
<span class="t" id="t125" style="left:479.40px;top:142.00px;font-size:7.0px;line-height:8.4px;color:#B4B4B4;transform:scaleX(0.7440);">Bright</span>
<svg style="left:475.1px;top:141.3px" width="4" height="4"><path d="M0.3 0.3h2.2v2.1h-2.2z" fill="#E0202A"/></svg>
<span class="t" id="t126" style="left:393.00px;top:151.00px;font-size:7.2px;line-height:8.64px;color:#111;transform:scaleX(0.7234);">CD8</span>
<div style="left:442.2px;top:151.0857142857143px;width:6.4px;height:8.128571428571428px;background:linear-gradient(135deg,#F4F4F0 10%,#C4C4C0 55%,#9A9A96);border:0.5px solid #A5A5A0;"></div>
<span class="t" id="t127" style="left:451.00px;top:151.00px;font-size:7.0px;line-height:8.4px;color:#B4B4B4;transform:scaleX(0.7446);">51</span>
<span class="t" id="t128" style="left:479.40px;top:151.00px;font-size:7.0px;line-height:8.4px;color:#B4B4B4;transform:scaleX(0.7440);">Bright</span>
<svg style="left:475.1px;top:150.6px" width="4" height="4"><path d="M0.3 0.3h2.2v2.1h-2.2z" fill="#E0202A"/></svg>
<span class="t" id="t129" style="left:393.00px;top:161.00px;font-size:7.2px;line-height:8.64px;color:#111;transform:scaleX(0.7402);">CD10</span>
<div style="left:442.2px;top:160.4142857142857px;width:6.4px;height:8.128571428571428px;background:linear-gradient(135deg,#F4F4F0 10%,#C4C4C0 55%,#9A9A96);border:0.5px solid #A5A5A0;"></div>
<span class="t" id="t130" style="left:451.00px;top:161.00px;font-size:7.0px;line-height:8.4px;color:#B4B4B4;transform:scaleX(0.7688);">3</span>
<span class="t" id="t131" style="left:479.40px;top:161.00px;font-size:7.0px;line-height:8.4px;color:#B4B4B4;transform:scaleX(0.7440);">Bright</span>
<svg style="left:475.1px;top:159.9px" width="4" height="4"><path d="M0.3 0.3h2.2v2.1h-2.2z" fill="#E0202A"/></svg>
<span class="t" id="t132" style="left:393.00px;top:170.00px;font-size:7.2px;line-height:8.64px;color:#111;transform:scaleX(0.7402);">CD19</span>
<div style="left:442.2px;top:169.74285714285713px;width:6.4px;height:8.128571428571428px;background:linear-gradient(135deg,#F4F4F0 10%,#C4C4C0 55%,#9A9A96);border:0.5px solid #A5A5A0;"></div>
<span class="t" id="t133" style="left:451.00px;top:170.00px;font-size:7.0px;line-height:8.4px;color:#B4B4B4;transform:scaleX(0.7688);">3</span>
<span class="t" id="t134" style="left:479.40px;top:170.00px;font-size:7.0px;line-height:8.4px;color:#B4B4B4;transform:scaleX(0.7556);">Dim</span>
<svg style="left:475.1px;top:169.2px" width="4" height="4"><path d="M0.3 0.3h2.2v2.1h-2.2z" fill="#E0202A"/></svg>
<span class="t" id="t135" style="left:393.00px;top:179.00px;font-size:7.2px;line-height:8.64px;color:#111;transform:scaleX(0.7511);">CD20</span>
<div style="left:442.2px;top:179.07142857142856px;width:6.4px;height:8.128571428571428px;background:linear-gradient(135deg,#F4F4F0 10%,#C4C4C0 55%,#9A9A96);border:0.5px solid #A5A5A0;"></div>
<span class="t" id="t136" style="left:451.00px;top:179.00px;font-size:7.0px;line-height:8.4px;color:#B4B4B4;transform:scaleX(0.7446);">98</span>
<span class="t" id="t137" style="left:479.40px;top:179.00px;font-size:7.0px;line-height:8.4px;color:#B4B4B4;transform:scaleX(0.7556);">Dim</span>
<svg style="left:475.1px;top:178.6px" width="4" height="4"><path d="M0.3 0.3h2.2v2.1h-2.2z" fill="#E0202A"/></svg>
<span class="t" id="t138" style="left:393.00px;top:189.00px;font-size:7.2px;line-height:8.64px;color:#111;transform:scaleX(0.7511);">CD22</span>
<div style="left:442.2px;top:188.39999999999998px;width:6.4px;height:8.128571428571428px;background:linear-gradient(135deg,#F4F4F0 10%,#C4C4C0 55%,#9A9A96);border:0.5px solid #A5A5A0;"></div>
<span class="t" id="t139" style="left:451.00px;top:189.00px;font-size:7.0px;line-height:8.4px;color:#B4B4B4;transform:scaleX(0.7446);">45</span>
<span class="t" id="t140" style="left:479.40px;top:189.00px;font-size:7.0px;line-height:8.4px;color:#B4B4B4;transform:scaleX(0.7556);">Dim</span>
<svg style="left:475.1px;top:187.9px" width="4" height="4"><path d="M0.3 0.3h2.2v2.1h-2.2z" fill="#E0202A"/></svg>
<span class="t" id="t141" style="left:393.00px;top:198.00px;font-size:7.2px;line-height:8.64px;color:#111;transform:scaleX(0.7605);">CD103</span>
<div style="left:442.2px;top:197.7285714285714px;width:6.4px;height:8.128571428571428px;background:linear-gradient(135deg,#F4F4F0 10%,#C4C4C0 55%,#9A9A96);border:0.5px solid #A5A5A0;"></div>
<span class="t" id="t142" style="left:451.00px;top:198.00px;font-size:7.0px;line-height:8.4px;color:#B4B4B4;transform:scaleX(0.7688);">4</span>
<span class="t" id="t143" style="left:479.40px;top:198.00px;font-size:7.0px;line-height:8.4px;color:#B4B4B4;transform:scaleX(0.7440);">Bright</span>
<svg style="left:475.1px;top:197.2px" width="4" height="4"><path d="M0.3 0.3h2.2v2.1h-2.2z" fill="#E0202A"/></svg>
<span class="t" id="t144" style="left:393.00px;top:207.00px;font-size:7.2px;line-height:8.64px;color:#111;transform:scaleX(0.7701);">Kappa</span>
<div style="left:442.2px;top:207.05714285714282px;width:6.4px;height:8.128571428571428px;background:linear-gradient(135deg,#F4F4F0 10%,#C4C4C0 55%,#9A9A96);border:0.5px solid #A5A5A0;"></div>
<span class="t" id="t145" style="left:451.00px;top:207.00px;font-size:7.0px;line-height:8.4px;color:#B4B4B4;transform:scaleX(0.7688);">5</span>
<span class="t" id="t146" style="left:479.40px;top:207.00px;font-size:7.0px;line-height:8.4px;color:#B4B4B4;transform:scaleX(0.7556);">Dim</span>
<span class="t" id="t147" style="left:393.00px;top:217.00px;font-size:7.2px;line-height:8.64px;color:#111;transform:scaleX(0.7551);">Lambda</span>
<div style="left:442.2px;top:216.38571428571427px;width:6.4px;height:8.128571428571428px;background:linear-gradient(135deg,#F4F4F0 10%,#C4C4C0 55%,#9A9A96);border:0.5px solid #A5A5A0;"></div>
<span class="t" id="t148" style="left:451.00px;top:217.00px;font-size:7.0px;line-height:8.4px;color:#B4B4B4;transform:scaleX(0.7446);">87</span>
<span class="t" id="t149" style="left:479.40px;top:217.00px;font-size:7.0px;line-height:8.4px;color:#B4B4B4;transform:scaleX(0.7556);">Dim</span>
<svg style="left:475.1px;top:215.9px" width="4" height="4"><path d="M0.3 0.3h2.2v2.1h-2.2z" fill="#E0202A"/></svg>
<span class="t" id="t150" style="left:393.00px;top:226.00px;font-size:7.2px;line-height:8.64px;color:#111;transform:scaleX(0.7402);">CD13</span>
<div style="left:442.2px;top:225.7142857142857px;width:6.4px;height:8.128571428571428px;background:linear-gradient(135deg,#F4F4F0 10%,#C4C4C0 55%,#9A9A96);border:0.5px solid #A5A5A0;"></div>
<span class="t" id="t151" style="left:451.00px;top:226.00px;font-size:7.0px;line-height:8.4px;color:#B4B4B4;transform:scaleX(0.7446);">86</span>
<span class="t" id="t152" style="left:479.40px;top:226.00px;font-size:7.0px;line-height:8.4px;color:#B4B4B4;transform:scaleX(0.7440);">Bright</span>
<svg style="left:475.1px;top:225.2px" width="4" height="4"><path d="M0.3 0.3h2.2v2.1h-2.2z" fill="#E0202A"/></svg>
<span class="t" id="t153" style="left:393.00px;top:235.00px;font-size:7.2px;line-height:8.64px;color:#111;transform:scaleX(0.7402);">CD14</span>
<div style="left:442.2px;top:235.04285714285712px;width:6.4px;height:8.128571428571428px;background:linear-gradient(135deg,#F4F4F0 10%,#C4C4C0 55%,#9A9A96);border:0.5px solid #A5A5A0;"></div>
<span class="t" id="t154" style="left:451.00px;top:235.00px;font-size:7.0px;line-height:8.4px;color:#B4B4B4;transform:scaleX(0.7446);">49</span>
<span class="t" id="t155" style="left:479.40px;top:235.00px;font-size:7.0px;line-height:8.4px;color:#B4B4B4;transform:scaleX(0.7556);">Dim</span>
<svg style="left:475.1px;top:234.5px" width="4" height="4"><path d="M0.3 0.3h2.2v2.1h-2.2z" fill="#E0202A"/></svg>
<div style="left:391.59999999999997px;top:244.07142857142858px;width:50.00000000000002px;height:8.928571428571427px;background:#000000;"></div>
<span class="t" id="t156" style="left:393.00px;top:245.00px;font-size:7.2px;line-height:8.64px;color:#FFFFFF;transform:scaleX(0.7511);">CD34</span>
<div style="left:442.2px;top:244.37142857142857px;width:6.4px;height:8.128571428571428px;background:linear-gradient(135deg,#F4F4F0 10%,#C4C4C0 55%,#9A9A96);border:0.5px solid #A5A5A0;"></div>
<span class="t" id="t157" style="left:451.00px;top:245.00px;font-size:7.0px;line-height:8.4px;color:#B4B4B4;transform:scaleX(0.7446);">30</span>
<span class="t" id="t158" style="left:479.40px;top:245.00px;font-size:7.0px;line-height:8.4px;color:#B4B4B4;transform:scaleX(0.7440);">Bright</span>
<svg style="left:475.1px;top:243.9px" width="4" height="4"><path d="M0.3 0.3h2.2v2.1h-2.2z" fill="#E0202A"/></svg>
<div style="left:380.6px;top:261.4px;width:304.4px;height:1px;background:#F7F6EF;"></div>
<div style="left:380.6px;top:262.2px;width:304.4px;height:12.6px;background:linear-gradient(90deg,#DCDBCD 0%,#E3E2D6 45%,#ECEBE1 100%);"></div>
<div style="left:380.6px;top:262.2px;width:304.4px;height:1.2px;background:#F1F0E8;"></div>
<span class="t" id="t159" style="left:382.40px;top:265.00px;font-size:7.8px;line-height:9.36px;color:#2a2a2a;transform:scaleX(0.8093);">Case Images (1)</span>
<div style="left:380.6px;top:274.8px;width:304.4px;height:1.1px;background:#9F9D8F;"></div>
<div style="left:380.6px;top:275.8px;width:304.4px;height:11.4px;background:#F3F1E7;"></div>
<div style="left:382px;top:276px;width:38.4px;height:11.4px;background:#FFFFFF;"></div>
<div style="left:382px;top:275.6px;width:38.4px;height:2.2px;background:linear-gradient(#E39A2C,#F6CF6E);border-radius:0 2px 0 0;"></div>
<div style="left:420.2px;top:276.6px;width:1px;height:10.4px;background:#A9A798;"></div>
<span class="t" id="t160" style="left:384.20px;top:277.00px;font-size:7.5px;line-height:9.0px;color:#222;transform:scaleX(0.8208);">Scatter Plot</span>
<div style="left:382px;top:287.2px;width:299px;height:153.5px;background:#000000;"></div>
<div style="left:380.4px;top:287.2px;width:1.6px;height:153.5px;background:#8F8E86;"></div>
<div style="left:681px;top:275.8px;width:4px;height:164.8px;background:#ECE9D8;"></div>
<svg style="left:0;top:0" width="686" height="446"><path d="M682 365.6l1.6 1.2-1.6 1.2 M682 370.2l1.6 1.2-1.6 1.2 M682 374.8l1.6 1.2-1.6 1.2" stroke="#333" stroke-width="0.8" fill="none"/></svg>
<svg style="left:486.4px;top:324px" width="90" height="79.4" viewBox="486.4 324 90 79.4"><rect x="486.4" y="324" width="89.8" height="79.2" fill="#FBFAF6"/><rect x="504.5" y="328.5" width="60" height="61" fill="#FEFEFC" stroke="#8A8A86" stroke-width="0.7"/><path d="M504.5 328.5v61h60" stroke="#333" stroke-width="0.9" fill="none"/><path d="M521.5 328.5v61 M504.5 371.5h60" stroke="#3A3A3A" stroke-width="0.9"/><circle cx="535.4" cy="336.7" r="0.55" fill="#D8203C" fill-opacity="0.9"/><circle cx="534.9" cy="334.8" r="0.55" fill="#D8203C" fill-opacity="0.9"/><circle cx="532.2" cy="336.1" r="0.55" fill="#D8203C" fill-opacity="0.9"/><circle cx="540.7" cy="334.5" r="0.55" fill="#D8203C" fill-opacity="0.9"/><circle cx="540.3" cy="334.2" r="0.55" fill="#D8203C" fill-opacity="0.9"/><circle cx="537.7" cy="335.0" r="0.55" fill="#D8203C" fill-opacity="0.9"/><circle cx="530.1" cy="339.4" r="0.55" fill="#D8203C" fill-opacity="0.9"/><circle cx="538.4" cy="335.5" r="0.55" fill="#D8203C" fill-opacity="0.9"/><circle cx="528.0" cy="333.9" r="0.55" fill="#D8203C" fill-opacity="0.9"/><circle cx="532.1" cy="335.5" r="0.55" fill="#D8203C" fill-opacity="0.9"/><circle cx="537.2" cy="334.7" r="0.55" fill="#D8203C" fill-opacity="0.9"/><circle cx="537.5" cy="333.1" r="0.55" fill="#D8203C" fill-opacity="0.9"/><circle cx="537.5" cy="335.6" r="0.55" fill="#D8203C" fill-opacity="0.9"/><circle cx="534.7" cy="339.9" r="0.55" fill="#D8203C" fill-opacity="0.9"/><circle cx="539.1" cy="337.0" r="0.55" fill="#D8203C" fill-opacity="0.9"/><circle cx="533.0" cy="334.5" r="0.55" fill="#D8203C" fill-opacity="0.9"/><circle cx="534.6" cy="335.5" r="0.55" fill="#D8203C" fill-opacity="0.9"/><circle cx="538.7" cy="334.8" r="0.55" fill="#D8203C" fill-opacity="0.9"/><circle cx="533.5" cy="333.8" r="0.55" fill="#D8203C" fill-opacity="0.9"/><circle cx="534.9" cy="338.6" r="0.55" fill="#D8203C" fill-opacity="0.9"/><circle cx="533.0" cy="336.9" r="0.55" fill="#D8203C" fill-opacity="0.9"/><circle cx="536.5" cy="331.4" r="0.55" fill="#D8203C" fill-opacity="0.9"/><circle cx="537.2" cy="338.0" r="0.55" fill="#D8203C" fill-opacity="0.9"/><circle cx="527.8" cy="337.4" r="0.55" fill="#D8203C" fill-opacity="0.9"/><circle cx="534.9" cy="333.6" r="0.55" fill="#D8203C" fill-opacity="0.9"/><circle cx="537.9" cy="334.3" r="0.55" fill="#D8203C" fill-opacity="0.9"/><circle cx="530.9" cy="339.1" r="0.55" fill="#D8203C" fill-opacity="0.9"/><circle cx="539.4" cy="336.3" r="0.55" fill="#D8203C" fill-opacity="0.9"/><circle cx="542.0" cy="333.9" r="0.55" fill="#D8203C" fill-opacity="0.9"/><circle cx="535.4" cy="332.2" r="0.55" fill="#D8203C" fill-opacity="0.9"/><circle cx="537.9" cy="333.0" r="0.55" fill="#D8203C" fill-opacity="0.9"/><circle cx="533.2" cy="333.1" r="0.55" fill="#D8203C" fill-opacity="0.9"/><circle cx="531.8" cy="335.4" r="0.55" fill="#D8203C" fill-opacity="0.9"/><circle cx="539.5" cy="329.0" r="0.55" fill="#D8203C" fill-opacity="0.9"/><circle cx="530.4" cy="337.8" r="0.55" fill="#D8203C" fill-opacity="0.9"/><circle cx="542.2" cy="334.4" r="0.55" fill="#D8203C" fill-opacity="0.9"/><circle cx="526.5" cy="332.5" r="0.55" fill="#D8203C" fill-opacity="0.9"/><circle cx="536.8" cy="333.1" r="0.55" fill="#D8203C" fill-opacity="0.9"/><circle cx="532.4" cy="338.9" r="0.55" fill="#D8203C" fill-opacity="0.9"/><circle cx="540.5" cy="334.0" r="0.55" fill="#D8203C" fill-opacity="0.9"/><circle cx="537.3" cy="335.8" r="0.55" fill="#D8203C" fill-opacity="0.9"/><circle cx="542.8" cy="334.2" r="0.55" fill="#D8203C" fill-opacity="0.9"/><circle cx="538.5" cy="335.6" r="0.55" fill="#D8203C" fill-opacity="0.9"/><circle cx="530.8" cy="340.2" r="0.55" fill="#D8203C" fill-opacity="0.9"/><circle cx="540.2" cy="335.0" r="0.55" fill="#D8203C" fill-opacity="0.9"/><circle cx="527.7" cy="336.7" r="0.55" fill="#D8203C" fill-opacity="0.9"/><circle cx="537.9" cy="330.1" r="0.55" fill="#D8203C" fill-opacity="0.9"/><circle cx="536.1" cy="337.7" r="0.55" fill="#D8203C" fill-opacity="0.9"/><circle cx="532.1" cy="340.6" r="0.55" fill="#D8203C" fill-opacity="0.9"/><circle cx="538.1" cy="334.1" r="0.55" fill="#D8203C" fill-opacity="0.9"/><circle cx="537.8" cy="336.1" r="0.55" fill="#D8203C" fill-opacity="0.9"/><circle cx="537.4" cy="337.5" r="0.55" fill="#D8203C" fill-opacity="0.9"/><circle cx="533.1" cy="335.3" r="0.55" fill="#D8203C" fill-opacity="0.9"/><circle cx="540.1" cy="333.8" r="0.55" fill="#D8203C" fill-opacity="0.9"/><circle cx="533.3" cy="338.5" r="0.55" fill="#D8203C" fill-opacity="0.9"/><circle cx="541.4" cy="332.1" r="0.55" fill="#D8203C" fill-opacity="0.9"/><circle cx="530.4" cy="336.9" r="0.55" fill="#D8203C" fill-opacity="0.9"/><circle cx="535.2" cy="334.8" r="0.55" fill="#D8203C" fill-opacity="0.9"/><circle cx="540.7" cy="331.0" r="0.55" fill="#D8203C" fill-opacity="0.9"/><circle cx="540.0" cy="330.6" r="0.55" fill="#D8203C" fill-opacity="0.9"/><circle cx="533.4" cy="337.7" r="0.55" fill="#D8203C" fill-opacity="0.9"/><circle cx="541.1" cy="335.4" r="0.55" fill="#D8203C" fill-opacity="0.9"/><circle cx="537.5" cy="335.0" r="0.55" fill="#D8203C" fill-opacity="0.9"/><circle cx="537.1" cy="336.2" r="0.55" fill="#D8203C" fill-opacity="0.9"/><circle cx="535.5" cy="336.1" r="0.55" fill="#D8203C" fill-opacity="0.9"/><circle cx="538.3" cy="334.4" r="0.55" fill="#D8203C" fill-opacity="0.9"/><circle cx="539.5" cy="335.3" r="0.55" fill="#D8203C" fill-opacity="0.9"/><circle cx="544.2" cy="333.0" r="0.55" fill="#D8203C" fill-opacity="0.9"/><circle cx="534.0" cy="335.0" r="0.55" fill="#D8203C" fill-opacity="0.9"/><circle cx="536.7" cy="337.2" r="0.55" fill="#D8203C" fill-opacity="0.9"/><circle cx="535.0" cy="336.5" r="0.55" fill="#D8203C" fill-opacity="0.9"/><circle cx="531.8" cy="337.3" r="0.55" fill="#D8203C" fill-opacity="0.9"/><circle cx="537.8" cy="335.1" r="0.55" fill="#D8203C" fill-opacity="0.9"/><circle cx="534.8" cy="337.2" r="0.55" fill="#D8203C" fill-opacity="0.9"/><circle cx="536.7" cy="333.7" r="0.55" fill="#D8203C" fill-opacity="0.9"/><circle cx="545.9" cy="332.5" r="0.55" fill="#D8203C" fill-opacity="0.9"/><circle cx="533.7" cy="335.8" r="0.55" fill="#D8203C" fill-opacity="0.9"/><circle cx="535.1" cy="335.4" r="0.55" fill="#D8203C" fill-opacity="0.9"/><circle cx="524.9" cy="338.1" r="0.55" fill="#D8203C" fill-opacity="0.9"/><circle cx="539.1" cy="331.2" r="0.55" fill="#D8203C" fill-opacity="0.9"/><circle cx="536.5" cy="337.4" r="0.55" fill="#D8203C" fill-opacity="0.9"/><circle cx="540.6" cy="337.2" r="0.55" fill="#D8203C" fill-opacity="0.9"/><circle cx="529.0" cy="336.9" r="0.55" fill="#D8203C" fill-opacity="0.9"/><circle cx="535.1" cy="337.0" r="0.55" fill="#D8203C" fill-opacity="0.9"/><circle cx="539.2" cy="330.5" r="0.55" fill="#D8203C" fill-opacity="0.9"/><circle cx="537.5" cy="331.0" r="0.55" fill="#D8203C" fill-opacity="0.9"/><circle cx="537.6" cy="337.5" r="0.55" fill="#D8203C" fill-opacity="0.9"/><circle cx="535.6" cy="335.8" r="0.55" fill="#D8203C" fill-opacity="0.9"/><circle cx="539.3" cy="334.4" r="0.55" fill="#D8203C" fill-opacity="0.9"/><circle cx="536.9" cy="338.6" r="0.55" fill="#D8203C" fill-opacity="0.9"/><circle cx="539.9" cy="333.1" r="0.55" fill="#D8203C" fill-opacity="0.9"/><circle cx="539.4" cy="333.3" r="0.55" fill="#D8203C" fill-opacity="0.9"/><circle cx="537.1" cy="336.5" r="0.55" fill="#D8203C" fill-opacity="0.9"/><circle cx="537.4" cy="336.3" r="0.55" fill="#D8203C" fill-opacity="0.9"/><circle cx="528.8" cy="334.1" r="0.55" fill="#D8203C" fill-opacity="0.9"/><circle cx="537.7" cy="332.2" r="0.55" fill="#D8203C" fill-opacity="0.9"/><circle cx="530.8" cy="333.5" r="0.55" fill="#D8203C" fill-opacity="0.9"/><circle cx="541.6" cy="335.0" r="0.55" fill="#D8203C" fill-opacity="0.9"/><circle cx="541.1" cy="331.1" r="0.55" fill="#D8203C" fill-opacity="0.9"/><circle cx="535.1" cy="332.7" r="0.55" fill="#D8203C" fill-opacity="0.9"/><circle cx="540.3" cy="337.5" r="0.55" fill="#D8203C" fill-opacity="0.9"/><circle cx="533.7" cy="339.9" r="0.55" fill="#D8203C" fill-opacity="0.9"/><circle cx="539.8" cy="333.4" r="0.55" fill="#D8203C" fill-opacity="0.9"/><circle cx="529.3" cy="341.1" r="0.55" fill="#D8203C" fill-opacity="0.9"/><circle cx="535.1" cy="334.0" r="0.55" fill="#D8203C" fill-opacity="0.9"/><circle cx="537.9" cy="335.5" r="0.55" fill="#D8203C" fill-opacity="0.9"/><circle cx="541.1" cy="330.8" r="0.55" fill="#D8203C" fill-opacity="0.9"/><circle cx="541.7" cy="336.8" r="0.55" fill="#D8203C" fill-opacity="0.9"/><circle cx="541.6" cy="332.7" r="0.55" fill="#D8203C" fill-opacity="0.9"/><circle cx="533.9" cy="338.5" r="0.55" fill="#D8203C" fill-opacity="0.9"/><circle cx="536.6" cy="335.3" r="0.55" fill="#D8203C" fill-opacity="0.9"/><circle cx="541.4" cy="332.6" r="0.55" fill="#D8203C" fill-opacity="0.9"/><circle cx="526.6" cy="337.7" r="0.55" fill="#D8203C" fill-opacity="0.9"/><circle cx="529.3" cy="339.6" r="0.55" fill="#D8203C" fill-opacity="0.9"/><circle cx="536.8" cy="333.4" r="0.55" fill="#D8203C" fill-opacity="0.9"/><circle cx="536.6" cy="337.0" r="0.55" fill="#D8203C" fill-opacity="0.9"/><circle cx="537.4" cy="338.0" r="0.55" fill="#D8203C" fill-opacity="0.9"/><circle cx="536.6" cy="337.5" r="0.55" fill="#D8203C" fill-opacity="0.9"/><circle cx="543.2" cy="336.5" r="0.55" fill="#D8203C" fill-opacity="0.9"/><circle cx="534.0" cy="338.1" r="0.55" fill="#D8203C" fill-opacity="0.9"/><circle cx="527.7" cy="335.6" r="0.55" fill="#D8203C" fill-opacity="0.9"/><circle cx="529.1" cy="340.3" r="0.55" fill="#D8203C" fill-opacity="0.9"/><circle cx="531.1" cy="336.9" r="0.55" fill="#D8203C" fill-opacity="0.9"/><circle cx="535.2" cy="335.4" r="0.55" fill="#D8203C" fill-opacity="0.9"/><circle cx="533.9" cy="336.6" r="0.55" fill="#D8203C" fill-opacity="0.9"/><circle cx="543.1" cy="332.7" r="0.55" fill="#D8203C" fill-opacity="0.9"/><circle cx="538.9" cy="336.6" r="0.55" fill="#D8203C" fill-opacity="0.9"/><circle cx="534.2" cy="332.8" r="0.55" fill="#D8203C" fill-opacity="0.9"/><circle cx="534.7" cy="338.3" r="0.55" fill="#D8203C" fill-opacity="0.9"/><circle cx="529.0" cy="336.3" r="0.55" fill="#D8203C" fill-opacity="0.9"/><circle cx="540.6" cy="335.5" r="0.55" fill="#D8203C" fill-opacity="0.9"/><circle cx="536.7" cy="336.9" r="0.55" fill="#D8203C" fill-opacity="0.9"/><circle cx="535.7" cy="332.4" r="0.55" fill="#D8203C" fill-opacity="0.9"/><circle cx="529.3" cy="336.1" r="0.55" fill="#D8203C" fill-opacity="0.9"/><circle cx="539.2" cy="332.6" r="0.55" fill="#D8203C" fill-opacity="0.9"/><circle cx="531.8" cy="334.8" r="0.55" fill="#D8203C" fill-opacity="0.9"/><circle cx="529.9" cy="337.2" r="0.55" fill="#D8203C" fill-opacity="0.9"/><circle cx="531.6" cy="337.7" r="0.55" fill="#D8203C" fill-opacity="0.9"/><circle cx="526.9" cy="339.3" r="0.55" fill="#D8203C" fill-opacity="0.9"/><circle cx="531.9" cy="331.9" r="0.55" fill="#D8203C" fill-opacity="0.9"/><circle cx="538.6" cy="333.6" r="0.55" fill="#D8203C" fill-opacity="0.9"/><circle cx="526.5" cy="336.5" r="0.55" fill="#D8203C" fill-opacity="0.9"/><circle cx="536.8" cy="333.8" r="0.55" fill="#D8203C" fill-opacity="0.9"/><circle cx="539.7" cy="335.7" r="0.55" fill="#D8203C" fill-opacity="0.9"/><circle cx="538.9" cy="334.9" r="0.55" fill="#D8203C" fill-opacity="0.9"/><circle cx="541.8" cy="334.7" r="0.55" fill="#D8203C" fill-opacity="0.9"/><circle cx="536.1" cy="330.0" r="0.55" fill="#D8203C" fill-opacity="0.9"/><circle cx="540.6" cy="336.7" r="0.55" fill="#D8203C" fill-opacity="0.9"/><circle cx="534.5" cy="334.6" r="0.55" fill="#D8203C" fill-opacity="0.9"/><circle cx="539.8" cy="339.8" r="0.55" fill="#D8203C" fill-opacity="0.9"/><circle cx="532.9" cy="338.0" r="0.55" fill="#D8203C" fill-opacity="0.9"/><circle cx="543.3" cy="332.2" r="0.55" fill="#D8203C" fill-opacity="0.9"/><circle cx="538.9" cy="336.3" r="0.55" fill="#D8203C" fill-opacity="0.9"/><circle cx="532.4" cy="336.3" r="0.55" fill="#D8203C" fill-opacity="0.9"/><circle cx="537.8" cy="336.6" r="0.55" fill="#D8203C" fill-opacity="0.9"/><circle cx="535.7" cy="334.8" r="0.55" fill="#D8203C" fill-opacity="0.9"/><circle cx="531.7" cy="335.9" r="0.55" fill="#D8203C" fill-opacity="0.9"/><circle cx="539.6" cy="334.1" r="0.55" fill="#D8203C" fill-opacity="0.9"/><circle cx="532.0" cy="334.6" r="0.55" fill="#D8203C" fill-opacity="0.9"/><circle cx="547.4" cy="333.8" r="0.55" fill="#D8203C" fill-opacity="0.9"/><circle cx="538.8" cy="335.3" r="0.55" fill="#D8203C" fill-opacity="0.9"/><circle cx="543.0" cy="333.7" r="0.55" fill="#D8203C" fill-opacity="0.9"/><circle cx="536.1" cy="336.4" r="0.55" fill="#D8203C" fill-opacity="0.9"/><circle cx="529.1" cy="340.2" r="0.55" fill="#D8203C" fill-opacity="0.9"/><circle cx="536.7" cy="333.2" r="0.55" fill="#D8203C" fill-opacity="0.9"/><circle cx="542.7" cy="337.2" r="0.55" fill="#D8203C" fill-opacity="0.9"/><circle cx="529.9" cy="335.8" r="0.55" fill="#D8203C" fill-opacity="0.9"/><circle cx="537.3" cy="335.2" r="0.55" fill="#D8203C" fill-opacity="0.9"/><circle cx="533.7" cy="333.7" r="0.55" fill="#D8203C" fill-opacity="0.9"/><circle cx="545.2" cy="334.4" r="0.55" fill="#D8203C" fill-opacity="0.9"/><circle cx="530.2" cy="334.0" r="0.55" fill="#D8203C" fill-opacity="0.9"/><circle cx="543.5" cy="334.9" r="0.55" fill="#D8203C" fill-opacity="0.9"/><circle cx="543.8" cy="334.3" r="0.55" fill="#D8203C" fill-opacity="0.9"/><circle cx="532.8" cy="337.0" r="0.55" fill="#D8203C" fill-opacity="0.9"/><circle cx="526.9" cy="336.7" r="0.55" fill="#D8203C" fill-opacity="0.9"/><circle cx="536.2" cy="336.4" r="0.55" fill="#D8203C" fill-opacity="0.9"/><circle cx="533.0" cy="336.0" r="0.55" fill="#D8203C" fill-opacity="0.9"/><circle cx="538.1" cy="335.4" r="0.55" fill="#D8203C" fill-opacity="0.9"/><circle cx="538.7" cy="334.7" r="0.55" fill="#D8203C" fill-opacity="0.9"/><circle cx="535.3" cy="337.4" r="0.55" fill="#D8203C" fill-opacity="0.9"/><circle cx="535.5" cy="333.3" r="0.55" fill="#D8203C" fill-opacity="0.9"/><circle cx="533.5" cy="336.1" r="0.55" fill="#D8203C" fill-opacity="0.9"/><circle cx="535.7" cy="335.7" r="0.55" fill="#D8203C" fill-opacity="0.9"/><circle cx="536.1" cy="335.6" r="0.55" fill="#D8203C" fill-opacity="0.9"/><circle cx="534.5" cy="332.7" r="0.55" fill="#D8203C" fill-opacity="0.9"/><circle cx="538.5" cy="336.9" r="0.55" fill="#D8203C" fill-opacity="0.9"/><circle cx="537.6" cy="334.2" r="0.55" fill="#D8203C" fill-opacity="0.9"/><circle cx="537.0" cy="332.5" r="0.55" fill="#D8203C" fill-opacity="0.9"/><circle cx="528.6" cy="338.1" r="0.55" fill="#D8203C" fill-opacity="0.9"/><circle cx="532.9" cy="338.1" r="0.55" fill="#D8203C" fill-opacity="0.9"/><circle cx="529.6" cy="331.1" r="0.55" fill="#D8203C" fill-opacity="0.9"/><circle cx="533.1" cy="340.1" r="0.55" fill="#D8203C" fill-opacity="0.9"/><circle cx="533.4" cy="332.8" r="0.55" fill="#D8203C" fill-opacity="0.9"/><circle cx="533.4" cy="337.4" r="0.55" fill="#D8203C" fill-opacity="0.9"/><circle cx="538.1" cy="334.9" r="0.55" fill="#D8203C" fill-opacity="0.9"/><circle cx="542.4" cy="334.6" r="0.55" fill="#D8203C" fill-opacity="0.9"/><circle cx="536.4" cy="336.5" r="0.55" fill="#D8203C" fill-opacity="0.9"/><circle cx="543.3" cy="334.9" r="0.55" fill="#D8203C" fill-opacity="0.9"/><circle cx="539.2" cy="331.4" r="0.55" fill="#D8203C" fill-opacity="0.9"/><circle cx="536.0" cy="337.0" r="0.55" fill="#D8203C" fill-opacity="0.9"/><circle cx="535.7" cy="337.9" r="0.55" fill="#D8203C" fill-opacity="0.9"/><circle cx="539.1" cy="336.3" r="0.55" fill="#D8203C" fill-opacity="0.9"/><circle cx="537.2" cy="341.0" r="0.55" fill="#D8203C" fill-opacity="0.9"/><circle cx="540.7" cy="332.9" r="0.55" fill="#D8203C" fill-opacity="0.9"/><circle cx="538.4" cy="340.7" r="0.55" fill="#D8203C" fill-opacity="0.9"/><circle cx="535.3" cy="337.6" r="0.55" fill="#D8203C" fill-opacity="0.9"/><circle cx="539.9" cy="333.8" r="0.55" fill="#D8203C" fill-opacity="0.9"/><circle cx="531.5" cy="337.3" r="0.55" fill="#D8203C" fill-opacity="0.9"/><circle cx="538.3" cy="337.1" r="0.55" fill="#D8203C" fill-opacity="0.9"/><circle cx="539.1" cy="334.1" r="0.55" fill="#D8203C" fill-opacity="0.9"/><circle cx="539.8" cy="335.1" r="0.55" fill="#D8203C" fill-opacity="0.9"/><circle cx="536.9" cy="335.0" r="0.55" fill="#D8203C" fill-opacity="0.9"/><circle cx="535.6" cy="337.0" r="0.55" fill="#D8203C" fill-opacity="0.9"/><circle cx="531.3" cy="335.4" r="0.55" fill="#D8203C" fill-opacity="0.9"/><circle cx="534.9" cy="332.0" r="0.55" fill="#D8203C" fill-opacity="0.9"/><circle cx="532.7" cy="331.5" r="0.55" fill="#D8203C" fill-opacity="0.9"/><circle cx="533.8" cy="337.4" r="0.55" fill="#D8203C" fill-opacity="0.9"/><circle cx="538.2" cy="334.3" r="0.55" fill="#D8203C" fill-opacity="0.9"/><circle cx="534.0" cy="332.5" r="0.55" fill="#D8203C" fill-opacity="0.9"/><circle cx="543.6" cy="333.7" r="0.55" fill="#D8203C" fill-opacity="0.9"/><circle cx="539.6" cy="331.7" r="0.55" fill="#D8203C" fill-opacity="0.9"/><circle cx="533.8" cy="331.5" r="0.55" fill="#D8203C" fill-opacity="0.9"/><circle cx="539.8" cy="336.1" r="0.55" fill="#D8203C" fill-opacity="0.9"/><circle cx="528.5" cy="337.8" r="0.55" fill="#D8203C" fill-opacity="0.9"/><circle cx="537.1" cy="330.5" r="0.55" fill="#D8203C" fill-opacity="0.9"/><circle cx="528.0" cy="335.5" r="0.55" fill="#D8203C" fill-opacity="0.9"/><circle cx="532.4" cy="333.1" r="0.55" fill="#D8203C" fill-opacity="0.9"/><circle cx="536.3" cy="335.7" r="0.55" fill="#D8203C" fill-opacity="0.9"/><circle cx="539.1" cy="335.8" r="0.55" fill="#D8203C" fill-opacity="0.9"/><circle cx="542.8" cy="335.6" r="0.55" fill="#D8203C" fill-opacity="0.9"/><circle cx="530.4" cy="336.0" r="0.55" fill="#D8203C" fill-opacity="0.9"/><circle cx="531.0" cy="334.4" r="0.55" fill="#D8203C" fill-opacity="0.9"/><circle cx="535.7" cy="335.3" r="0.55" fill="#D8203C" fill-opacity="0.9"/><circle cx="536.7" cy="331.1" r="0.55" fill="#D8203C" fill-opacity="0.9"/><circle cx="531.1" cy="336.9" r="0.55" fill="#D8203C" fill-opacity="0.9"/><circle cx="535.0" cy="334.8" r="0.55" fill="#D8203C" fill-opacity="0.9"/><circle cx="535.2" cy="333.6" r="0.55" fill="#D8203C" fill-opacity="0.9"/><circle cx="539.0" cy="335.0" r="0.55" fill="#D8203C" fill-opacity="0.9"/><circle cx="535.1" cy="333.9" r="0.55" fill="#D8203C" fill-opacity="0.9"/><circle cx="533.2" cy="329.6" r="0.55" fill="#D8203C" fill-opacity="0.9"/><circle cx="532.2" cy="336.7" r="0.55" fill="#D8203C" fill-opacity="0.9"/><circle cx="530.2" cy="337.8" r="0.55" fill="#D8203C" fill-opacity="0.9"/><circle cx="535.5" cy="332.0" r="0.55" fill="#D8203C" fill-opacity="0.9"/><circle cx="534.8" cy="334.9" r="0.55" fill="#D8203C" fill-opacity="0.9"/><circle cx="538.3" cy="335.9" r="0.55" fill="#D8203C" fill-opacity="0.9"/><circle cx="535.2" cy="333.4" r="0.55" fill="#D8203C" fill-opacity="0.9"/><circle cx="535.4" cy="335.3" r="0.55" fill="#D8203C" fill-opacity="0.9"/><circle cx="539.1" cy="334.8" r="0.55" fill="#D8203C" fill-opacity="0.9"/><circle cx="532.1" cy="333.3" r="0.55" fill="#D8203C" fill-opacity="0.9"/><circle cx="533.9" cy="334.1" r="0.55" fill="#D8203C" fill-opacity="0.9"/><circle cx="531.5" cy="336.6" r="0.55" fill="#D8203C" fill-opacity="0.9"/><circle cx="534.1" cy="336.1" r="0.55" fill="#D8203C" fill-opacity="0.9"/><circle cx="537.7" cy="333.6" r="0.55" fill="#D8203C" fill-opacity="0.9"/><circle cx="544.9" cy="331.2" r="0.55" fill="#D8203C" fill-opacity="0.9"/><circle cx="540.4" cy="333.9" r="0.55" fill="#D8203C" fill-opacity="0.9"/><circle cx="533.2" cy="336.8" r="0.55" fill="#D8203C" fill-opacity="0.9"/><circle cx="540.2" cy="339.4" r="0.55" fill="#D8203C" fill-opacity="0.9"/><circle cx="538.3" cy="337.5" r="0.55" fill="#D8203C" fill-opacity="0.9"/><circle cx="539.8" cy="336.1" r="0.55" fill="#D8203C" fill-opacity="0.9"/><circle cx="537.9" cy="334.1" r="0.55" fill="#D8203C" fill-opacity="0.9"/><circle cx="537.2" cy="332.1" r="0.55" fill="#D8203C" fill-opacity="0.9"/><circle cx="539.9" cy="331.3" r="0.55" fill="#D8203C" fill-opacity="0.9"/><circle cx="538.7" cy="339.4" r="0.55" fill="#D8203C" fill-opacity="0.9"/><circle cx="535.1" cy="335.6" r="0.55" fill="#D8203C" fill-opacity="0.9"/><circle cx="540.6" cy="333.6" r="0.55" fill="#D8203C" fill-opacity="0.9"/><circle cx="533.0" cy="336.9" r="0.55" fill="#D8203C" fill-opacity="0.9"/><circle cx="538.9" cy="335.9" r="0.55" fill="#D8203C" fill-opacity="0.9"/><circle cx="534.3" cy="340.1" r="0.55" fill="#D8203C" fill-opacity="0.9"/><circle cx="542.6" cy="332.8" r="0.55" fill="#D8203C" fill-opacity="0.9"/><circle cx="536.7" cy="333.9" r="0.55" fill="#D8203C" fill-opacity="0.9"/><circle cx="541.0" cy="331.6" r="0.55" fill="#D8203C" fill-opacity="0.9"/><circle cx="538.3" cy="333.2" r="0.55" fill="#D8203C" fill-opacity="0.9"/><circle cx="533.8" cy="337.8" r="0.55" fill="#D8203C" fill-opacity="0.9"/><circle cx="541.3" cy="333.3" r="0.55" fill="#D8203C" fill-opacity="0.9"/><circle cx="534.0" cy="337.9" r="0.55" fill="#D8203C" fill-opacity="0.9"/><circle cx="536.0" cy="335.9" r="0.55" fill="#D8203C" fill-opacity="0.9"/><circle cx="542.9" cy="335.5" r="0.55" fill="#D8203C" fill-opacity="0.9"/><circle cx="535.8" cy="340.9" r="0.55" fill="#D8203C" fill-opacity="0.9"/><circle cx="536.6" cy="336.9" r="0.55" fill="#D8203C" fill-opacity="0.9"/><circle cx="533.4" cy="336.0" r="0.55" fill="#D8203C" fill-opacity="0.9"/><circle cx="530.5" cy="341.6" r="0.55" fill="#D8203C" fill-opacity="0.9"/><circle cx="540.4" cy="330.6" r="0.55" fill="#D8203C" fill-opacity="0.9"/><circle cx="528.8" cy="333.9" r="0.55" fill="#D8203C" fill-opacity="0.9"/><circle cx="540.3" cy="332.5" r="0.55" fill="#D8203C" fill-opacity="0.9"/><circle cx="535.5" cy="334.6" r="0.55" fill="#D8203C" fill-opacity="0.9"/><circle cx="534.7" cy="333.0" r="0.55" fill="#D8203C" fill-opacity="0.9"/><circle cx="535.0" cy="332.1" r="0.55" fill="#D8203C" fill-opacity="0.9"/><circle cx="536.0" cy="336.0" r="0.55" fill="#D8203C" fill-opacity="0.9"/><circle cx="537.7" cy="334.0" r="0.55" fill="#D8203C" fill-opacity="0.9"/><circle cx="532.6" cy="336.8" r="0.55" fill="#D8203C" fill-opacity="0.9"/><circle cx="535.3" cy="339.3" r="0.55" fill="#D8203C" fill-opacity="0.9"/><circle cx="538.9" cy="333.8" r="0.55" fill="#D8203C" fill-opacity="0.9"/><circle cx="533.6" cy="334.4" r="0.55" fill="#D8203C" fill-opacity="0.9"/><circle cx="532.0" cy="335.8" r="0.55" fill="#D8203C" fill-opacity="0.9"/><circle cx="537.6" cy="335.9" r="0.55" fill="#D8203C" fill-opacity="0.9"/><circle cx="539.9" cy="338.9" r="0.55" fill="#D8203C" fill-opacity="0.9"/><circle cx="533.2" cy="336.2" r="0.55" fill="#D8203C" fill-opacity="0.9"/><circle cx="534.1" cy="336.3" r="0.55" fill="#D8203C" fill-opacity="0.9"/><circle cx="536.9" cy="335.9" r="0.55" fill="#D8203C" fill-opacity="0.9"/><circle cx="535.3" cy="336.3" r="0.55" fill="#D8203C" fill-opacity="0.9"/><circle cx="536.8" cy="336.8" r="0.55" fill="#D8203C" fill-opacity="0.9"/><circle cx="527.8" cy="336.0" r="0.55" fill="#D8203C" fill-opacity="0.9"/><circle cx="535.2" cy="333.0" r="0.55" fill="#D8203C" fill-opacity="0.9"/><circle cx="532.4" cy="338.1" r="0.55" fill="#D8203C" fill-opacity="0.9"/><circle cx="533.9" cy="337.5" r="0.55" fill="#D8203C" fill-opacity="0.9"/><circle cx="539.2" cy="334.8" r="0.55" fill="#D8203C" fill-opacity="0.9"/><circle cx="537.9" cy="334.2" r="0.55" fill="#D8203C" fill-opacity="0.9"/><circle cx="530.4" cy="337.2" r="0.55" fill="#D8203C" fill-opacity="0.9"/><circle cx="537.4" cy="333.4" r="0.55" fill="#D8203C" fill-opacity="0.9"/><circle cx="536.2" cy="337.0" r="0.55" fill="#D8203C" fill-opacity="0.9"/><circle cx="533.0" cy="337.8" r="0.55" fill="#D8203C" fill-opacity="0.9"/><circle cx="542.9" cy="331.3" r="0.55" fill="#D8203C" fill-opacity="0.9"/><circle cx="536.5" cy="334.7" r="0.55" fill="#D8203C" fill-opacity="0.9"/><circle cx="542.3" cy="333.7" r="0.55" fill="#D8203C" fill-opacity="0.9"/><circle cx="539.0" cy="332.4" r="0.55" fill="#D8203C" fill-opacity="0.9"/><circle cx="535.9" cy="335.2" r="0.55" fill="#D8203C" fill-opacity="0.9"/><circle cx="530.1" cy="340.9" r="0.55" fill="#D8203C" fill-opacity="0.9"/><circle cx="538.2" cy="330.1" r="0.55" fill="#D8203C" fill-opacity="0.9"/><circle cx="538.8" cy="333.8" r="0.55" fill="#D8203C" fill-opacity="0.9"/><circle cx="538.1" cy="335.3" r="0.55" fill="#D8203C" fill-opacity="0.9"/><circle cx="529.9" cy="336.9" r="0.55" fill="#D8203C" fill-opacity="0.9"/><circle cx="541.4" cy="331.8" r="0.55" fill="#D8203C" fill-opacity="0.9"/><circle cx="530.9" cy="333.7" r="0.55" fill="#D8203C" fill-opacity="0.9"/><circle cx="531.4" cy="337.7" r="0.55" fill="#D8203C" fill-opacity="0.9"/><circle cx="543.0" cy="333.7" r="0.55" fill="#D8203C" fill-opacity="0.9"/><circle cx="538.7" cy="339.7" r="0.55" fill="#D8203C" fill-opacity="0.9"/><circle cx="533.4" cy="334.5" r="0.55" fill="#D8203C" fill-opacity="0.9"/><circle cx="538.5" cy="335.6" r="0.55" fill="#D8203C" fill-opacity="0.9"/><circle cx="531.1" cy="334.1" r="0.55" fill="#D8203C" fill-opacity="0.9"/><circle cx="537.3" cy="335.3" r="0.55" fill="#D8203C" fill-opacity="0.9"/><circle cx="530.7" cy="336.6" r="0.55" fill="#D8203C" fill-opacity="0.9"/><circle cx="534.2" cy="337.0" r="0.55" fill="#D8203C" fill-opacity="0.9"/><circle cx="535.5" cy="335.2" r="0.55" fill="#D8203C" fill-opacity="0.9"/><circle cx="535.4" cy="338.0" r="0.55" fill="#D8203C" fill-opacity="0.9"/><circle cx="541.2" cy="332.4" r="0.55" fill="#D8203C" fill-opacity="0.9"/><circle cx="538.7" cy="332.3" r="0.55" fill="#D8203C" fill-opacity="0.9"/><circle cx="536.9" cy="336.7" r="0.55" fill="#D8203C" fill-opacity="0.9"/><circle cx="541.7" cy="332.2" r="0.55" fill="#D8203C" fill-opacity="0.9"/><circle cx="535.9" cy="335.7" r="0.55" fill="#D8203C" fill-opacity="0.9"/><circle cx="530.1" cy="337.4" r="0.55" fill="#D8203C" fill-opacity="0.9"/><circle cx="533.6" cy="337.0" r="0.55" fill="#D8203C" fill-opacity="0.9"/><circle cx="530.0" cy="332.6" r="0.55" fill="#D8203C" fill-opacity="0.9"/><circle cx="536.4" cy="335.7" r="0.55" fill="#D8203C" fill-opacity="0.9"/><circle cx="534.5" cy="337.9" r="0.55" fill="#D8203C" fill-opacity="0.9"/><circle cx="534.4" cy="334.3" r="0.55" fill="#D8203C" fill-opacity="0.9"/><circle cx="536.6" cy="331.1" r="0.55" fill="#D8203C" fill-opacity="0.9"/><circle cx="533.3" cy="336.1" r="0.55" fill="#D8203C" fill-opacity="0.9"/><circle cx="539.2" cy="333.6" r="0.55" fill="#D8203C" fill-opacity="0.9"/><circle cx="536.7" cy="333.3" r="0.55" fill="#D8203C" fill-opacity="0.9"/><circle cx="538.5" cy="338.4" r="0.55" fill="#D8203C" fill-opacity="0.9"/><circle cx="535.2" cy="341.3" r="0.55" fill="#D8203C" fill-opacity="0.9"/><circle cx="533.5" cy="336.2" r="0.55" fill="#D8203C" fill-opacity="0.9"/><circle cx="537.5" cy="337.2" r="0.55" fill="#D8203C" fill-opacity="0.9"/><circle cx="529.5" cy="332.4" r="0.55" fill="#D8203C" fill-opacity="0.9"/><circle cx="539.0" cy="336.0" r="0.55" fill="#D8203C" fill-opacity="0.9"/><circle cx="540.5" cy="340.0" r="0.55" fill="#D8203C" fill-opacity="0.9"/><circle cx="537.0" cy="335.5" r="0.55" fill="#D8203C" fill-opacity="0.9"/><circle cx="540.0" cy="334.7" r="0.55" fill="#D8203C" fill-opacity="0.9"/><circle cx="541.6" cy="330.1" r="0.55" fill="#D8203C" fill-opacity="0.9"/><circle cx="538.9" cy="333.2" r="0.55" fill="#D8203C" fill-opacity="0.9"/><circle cx="541.3" cy="338.5" r="0.55" fill="#D8203C" fill-opacity="0.9"/><circle cx="535.8" cy="334.7" r="0.55" fill="#D8203C" fill-opacity="0.9"/><circle cx="533.4" cy="334.1" r="0.55" fill="#D8203C" fill-opacity="0.9"/><circle cx="534.0" cy="337.5" r="0.55" fill="#D8203C" fill-opacity="0.9"/><circle cx="536.2" cy="335.3" r="0.55" fill="#D8203C" fill-opacity="0.9"/><circle cx="536.0" cy="337.4" r="0.55" fill="#D8203C" fill-opacity="0.9"/><circle cx="537.8" cy="334.2" r="0.55" fill="#D8203C" fill-opacity="0.9"/><circle cx="538.5" cy="333.9" r="0.55" fill="#D8203C" fill-opacity="0.9"/><circle cx="532.6" cy="340.0" r="0.55" fill="#D8203C" fill-opacity="0.9"/><circle cx="537.1" cy="332.5" r="0.55" fill="#D8203C" fill-opacity="0.9"/><circle cx="540.5" cy="334.4" r="0.55" fill="#D8203C" fill-opacity="0.9"/><circle cx="531.1" cy="340.9" r="0.55" fill="#D8203C" fill-opacity="0.9"/><circle cx="537.6" cy="339.4" r="0.4" fill="#D8203C" fill-opacity="0.7"/><circle cx="535.2" cy="336.5" r="0.4" fill="#D8203C" fill-opacity="0.7"/><circle cx="528.7" cy="344.7" r="0.4" fill="#D8203C" fill-opacity="0.7"/><circle cx="534.2" cy="336.5" r="0.4" fill="#D8203C" fill-opacity="0.7"/><circle cx="536.3" cy="336.8" r="0.4" fill="#D8203C" fill-opacity="0.7"/><circle cx="537.1" cy="334.5" r="0.4" fill="#D8203C" fill-opacity="0.7"/><circle cx="530.6" cy="330.8" r="0.4" fill="#D8203C" fill-opacity="0.7"/><circle cx="533.6" cy="340.8" r="0.4" fill="#D8203C" fill-opacity="0.7"/><circle cx="540.3" cy="332.8" r="0.4" fill="#D8203C" fill-opacity="0.7"/><circle cx="536.6" cy="342.8" r="0.4" fill="#D8203C" fill-opacity="0.7"/><circle cx="534.2" cy="340.7" r="0.4" fill="#D8203C" fill-opacity="0.7"/><circle cx="542.7" cy="333.2" r="0.4" fill="#D8203C" fill-opacity="0.7"/><circle cx="539.2" cy="332.0" r="0.4" fill="#D8203C" fill-opacity="0.7"/><circle cx="535.4" cy="336.7" r="0.4" fill="#D8203C" fill-opacity="0.7"/><circle cx="537.0" cy="340.8" r="0.4" fill="#D8203C" fill-opacity="0.7"/><circle cx="544.9" cy="329.1" r="0.4" fill="#D8203C" fill-opacity="0.7"/><circle cx="532.6" cy="340.6" r="0.4" fill="#D8203C" fill-opacity="0.7"/><circle cx="530.3" cy="341.9" r="0.4" fill="#D8203C" fill-opacity="0.7"/><circle cx="536.8" cy="335.1" r="0.4" fill="#D8203C" fill-opacity="0.7"/><circle cx="534.4" cy="331.2" r="0.4" fill="#D8203C" fill-opacity="0.7"/><circle cx="535.5" cy="330.6" r="0.4" fill="#D8203C" fill-opacity="0.7"/><circle cx="530.2" cy="337.6" r="0.4" fill="#D8203C" fill-opacity="0.7"/><circle cx="534.0" cy="341.3" r="0.4" fill="#D8203C" fill-opacity="0.7"/><circle cx="534.2" cy="336.0" r="0.4" fill="#D8203C" fill-opacity="0.7"/><circle cx="539.9" cy="341.1" r="0.4" fill="#D8203C" fill-opacity="0.7"/><circle cx="535.2" cy="338.6" r="0.4" fill="#D8203C" fill-opacity="0.7"/><circle cx="540.9" cy="335.1" r="0.4" fill="#D8203C" fill-opacity="0.7"/><circle cx="532.6" cy="348.8" r="0.4" fill="#D8203C" fill-opacity="0.7"/><circle cx="535.0" cy="338.9" r="0.4" fill="#D8203C" fill-opacity="0.7"/><circle cx="540.3" cy="337.1" r="0.4" fill="#D8203C" fill-opacity="0.7"/><circle cx="531.4" cy="334.9" r="0.4" fill="#D8203C" fill-opacity="0.7"/><circle cx="536.8" cy="340.5" r="0.4" fill="#D8203C" fill-opacity="0.7"/><circle cx="527.5" cy="337.1" r="0.4" fill="#D8203C" fill-opacity="0.7"/><circle cx="531.0" cy="331.4" r="0.4" fill="#D8203C" fill-opacity="0.7"/><circle cx="532.5" cy="336.8" r="0.4" fill="#D8203C" fill-opacity="0.7"/><circle cx="535.5" cy="334.1" r="0.4" fill="#D8203C" fill-opacity="0.7"/><circle cx="529.6" cy="338.6" r="0.4" fill="#D8203C" fill-opacity="0.7"/><circle cx="533.1" cy="335.5" r="0.4" fill="#D8203C" fill-opacity="0.7"/><circle cx="535.9" cy="339.8" r="0.4" fill="#D8203C" fill-opacity="0.7"/><circle cx="543.2" cy="339.8" r="0.4" fill="#D8203C" fill-opacity="0.7"/><circle cx="530.0" cy="338.2" r="0.4" fill="#D8203C" fill-opacity="0.7"/><circle cx="525.8" cy="350.0" r="0.4" fill="#D8203C" fill-opacity="0.7"/><circle cx="530.9" cy="339.3" r="0.4" fill="#D8203C" fill-opacity="0.7"/><circle cx="534.7" cy="331.8" r="0.4" fill="#D8203C" fill-opacity="0.7"/><circle cx="536.7" cy="336.2" r="0.4" fill="#D8203C" fill-opacity="0.7"/><circle cx="526.2" cy="343.2" r="0.4" fill="#D8203C" fill-opacity="0.7"/><circle cx="538.8" cy="336.0" r="0.4" fill="#D8203C" fill-opacity="0.7"/><circle cx="537.6" cy="337.6" r="0.4" fill="#D8203C" fill-opacity="0.7"/><circle cx="540.4" cy="333.4" r="0.4" fill="#D8203C" fill-opacity="0.7"/><circle cx="538.0" cy="333.9" r="0.4" fill="#D8203C" fill-opacity="0.7"/><circle cx="536.6" cy="333.0" r="0.4" fill="#D8203C" fill-opacity="0.7"/><circle cx="537.0" cy="343.3" r="0.4" fill="#D8203C" fill-opacity="0.7"/><circle cx="536.4" cy="335.8" r="0.4" fill="#D8203C" fill-opacity="0.7"/><circle cx="527.6" cy="338.0" r="0.4" fill="#D8203C" fill-opacity="0.7"/><circle cx="537.1" cy="340.0" r="0.4" fill="#D8203C" fill-opacity="0.7"/><circle cx="537.5" cy="338.0" r="0.4" fill="#D8203C" fill-opacity="0.7"/><circle cx="536.6" cy="341.9" r="0.4" fill="#D8203C" fill-opacity="0.7"/><circle cx="531.7" cy="336.8" r="0.4" fill="#D8203C" fill-opacity="0.7"/><circle cx="538.9" cy="335.4" r="0.4" fill="#D8203C" fill-opacity="0.7"/><circle cx="532.2" cy="336.4" r="0.4" fill="#D8203C" fill-opacity="0.7"/><circle cx="534.3" cy="340.1" r="0.4" fill="#D8203C" fill-opacity="0.7"/><circle cx="534.1" cy="332.7" r="0.4" fill="#D8203C" fill-opacity="0.7"/><circle cx="536.9" cy="336.9" r="0.4" fill="#D8203C" fill-opacity="0.7"/><circle cx="531.0" cy="342.6" r="0.4" fill="#D8203C" fill-opacity="0.7"/><circle cx="532.6" cy="337.2" r="0.4" fill="#D8203C" fill-opacity="0.7"/><circle cx="540.6" cy="339.6" r="0.4" fill="#D8203C" fill-opacity="0.7"/><circle cx="531.9" cy="340.7" r="0.4" fill="#D8203C" fill-opacity="0.7"/><circle cx="534.3" cy="347.1" r="0.4" fill="#D8203C" fill-opacity="0.7"/><circle cx="534.2" cy="342.6" r="0.4" fill="#D8203C" fill-opacity="0.7"/><circle cx="532.8" cy="341.8" r="0.4" fill="#D8203C" fill-opacity="0.7"/><circle cx="533.3" cy="340.2" r="0.4" fill="#D8203C" fill-opacity="0.7"/><circle cx="532.9" cy="335.6" r="0.4" fill="#D8203C" fill-opacity="0.7"/><circle cx="545.0" cy="332.1" r="0.4" fill="#D8203C" fill-opacity="0.7"/><circle cx="528.0" cy="344.5" r="0.4" fill="#D8203C" fill-opacity="0.7"/><circle cx="528.2" cy="345.7" r="0.4" fill="#D8203C" fill-opacity="0.7"/><circle cx="532.0" cy="339.5" r="0.4" fill="#D8203C" fill-opacity="0.7"/><circle cx="540.8" cy="334.5" r="0.4" fill="#D8203C" fill-opacity="0.7"/><circle cx="524.9" cy="335.8" r="0.4" fill="#D8203C" fill-opacity="0.7"/><circle cx="541.5" cy="336.7" r="0.4" fill="#D8203C" fill-opacity="0.7"/><circle cx="532.0" cy="342.4" r="0.4" fill="#D8203C" fill-opacity="0.7"/><circle cx="538.0" cy="338.2" r="0.4" fill="#D8203C" fill-opacity="0.7"/><circle cx="523.1" cy="342.5" r="0.4" fill="#D8203C" fill-opacity="0.7"/><circle cx="540.1" cy="337.4" r="0.4" fill="#D8203C" fill-opacity="0.7"/><circle cx="536.2" cy="338.6" r="0.4" fill="#D8203C" fill-opacity="0.7"/><circle cx="533.0" cy="338.5" r="0.4" fill="#D8203C" fill-opacity="0.7"/><circle cx="538.0" cy="333.8" r="0.4" fill="#D8203C" fill-opacity="0.7"/><circle cx="538.7" cy="332.0" r="0.4" fill="#D8203C" fill-opacity="0.7"/><circle cx="534.9" cy="335.1" r="0.4" fill="#D8203C" fill-opacity="0.7"/><circle cx="534.1" cy="334.9" r="0.4" fill="#D8203C" fill-opacity="0.7"/><circle cx="528.7" cy="345.2" r="0.4" fill="#D8203C" fill-opacity="0.7"/><circle cx="535.0" cy="334.9" r="0.4" fill="#D8203C" fill-opacity="0.7"/><circle cx="537.2" cy="340.1" r="0.4" fill="#D8203C" fill-opacity="0.7"/><circle cx="529.6" cy="339.7" r="0.4" fill="#D8203C" fill-opacity="0.7"/><circle cx="538.0" cy="337.7" r="0.4" fill="#D8203C" fill-opacity="0.7"/><circle cx="529.2" cy="331.7" r="0.4" fill="#D8203C" fill-opacity="0.7"/><circle cx="541.1" cy="335.3" r="0.4" fill="#D8203C" fill-opacity="0.7"/><circle cx="534.1" cy="336.6" r="0.4" fill="#D8203C" fill-opacity="0.7"/><circle cx="535.0" cy="335.5" r="0.4" fill="#D8203C" fill-opacity="0.7"/><circle cx="528.3" cy="337.9" r="0.4" fill="#D8203C" fill-opacity="0.7"/><circle cx="530.6" cy="337.1" r="0.4" fill="#D8203C" fill-opacity="0.7"/><circle cx="530.0" cy="342.6" r="0.4" fill="#D8203C" fill-opacity="0.7"/><circle cx="529.3" cy="343.0" r="0.4" fill="#D8203C" fill-opacity="0.7"/><circle cx="530.2" cy="341.3" r="0.4" fill="#D8203C" fill-opacity="0.7"/><circle cx="541.5" cy="334.5" r="0.4" fill="#D8203C" fill-opacity="0.7"/><circle cx="531.1" cy="339.6" r="0.4" fill="#D8203C" fill-opacity="0.7"/><circle cx="505.9" cy="376.2" r="0.45" fill="#D8203C" fill-opacity="0.85"/><circle cx="507.5" cy="388.0" r="0.45" fill="#D8203C" fill-opacity="0.85"/><circle cx="507.0" cy="388.6" r="0.45" fill="#D8203C" fill-opacity="0.85"/><circle cx="507.9" cy="383.5" r="0.45" fill="#D8203C" fill-opacity="0.85"/><circle cx="508.5" cy="384.8" r="0.45" fill="#D8203C" fill-opacity="0.85"/><circle cx="506.4" cy="389.1" r="0.45" fill="#D8203C" fill-opacity="0.85"/><circle cx="506.3" cy="386.9" r="0.45" fill="#D8203C" fill-opacity="0.85"/><circle cx="506.0" cy="376.3" r="0.45" fill="#D8203C" fill-opacity="0.85"/><circle cx="506.5" cy="389.0" r="0.45" fill="#D8203C" fill-opacity="0.85"/><circle cx="508.7" cy="389.0" r="0.45" fill="#D8203C" fill-opacity="0.85"/><circle cx="507.2" cy="388.0" r="0.45" fill="#D8203C" fill-opacity="0.85"/><circle cx="506.1" cy="375.5" r="0.45" fill="#D8203C" fill-opacity="0.85"/><circle cx="513.9" cy="388.2" r="0.45" fill="#D8203C" fill-opacity="0.85"/><circle cx="507.2" cy="386.9" r="0.45" fill="#D8203C" fill-opacity="0.85"/><circle cx="508.3" cy="386.4" r="0.45" fill="#D8203C" fill-opacity="0.85"/><circle cx="505.5" cy="384.8" r="0.45" fill="#D8203C" fill-opacity="0.85"/><circle cx="507.6" cy="385.6" r="0.45" fill="#D8203C" fill-opacity="0.85"/><circle cx="506.2" cy="385.4" r="0.45" fill="#D8203C" fill-opacity="0.85"/><circle cx="513.0" cy="389.0" r="0.45" fill="#D8203C" fill-opacity="0.85"/><circle cx="506.1" cy="383.5" r="0.45" fill="#D8203C" fill-opacity="0.85"/><circle cx="508.4" cy="389.0" r="0.45" fill="#D8203C" fill-opacity="0.85"/><circle cx="507.5" cy="388.1" r="0.45" fill="#D8203C" fill-opacity="0.85"/><circle cx="509.6" cy="374.3" r="0.45" fill="#D8203C" fill-opacity="0.85"/><circle cx="508.5" cy="374.8" r="0.45" fill="#D8203C" fill-opacity="0.85"/><circle cx="508.3" cy="377.7" r="0.45" fill="#D8203C" fill-opacity="0.85"/><circle cx="508.5" cy="383.1" r="0.45" fill="#D8203C" fill-opacity="0.85"/><circle cx="507.5" cy="383.8" r="0.45" fill="#D8203C" fill-opacity="0.85"/><circle cx="508.4" cy="382.4" r="0.45" fill="#D8203C" fill-opacity="0.85"/><circle cx="511.6" cy="381.7" r="0.45" fill="#D8203C" fill-opacity="0.85"/><circle cx="513.9" cy="374.8" r="0.45" fill="#D8203C" fill-opacity="0.85"/><circle cx="507.7" cy="383.7" r="0.45" fill="#D8203C" fill-opacity="0.85"/><circle cx="506.2" cy="383.6" r="0.45" fill="#D8203C" fill-opacity="0.85"/><circle cx="509.9" cy="388.6" r="0.45" fill="#D8203C" fill-opacity="0.85"/><circle cx="509.1" cy="379.4" r="0.45" fill="#D8203C" fill-opacity="0.85"/><circle cx="507.4" cy="387.5" r="0.45" fill="#D8203C" fill-opacity="0.85"/><circle cx="505.4" cy="386.8" r="0.45" fill="#D8203C" fill-opacity="0.85"/><circle cx="506.5" cy="384.0" r="0.45" fill="#D8203C" fill-opacity="0.85"/><circle cx="511.7" cy="372.6" r="0.45" fill="#D8203C" fill-opacity="0.85"/><circle cx="509.7" cy="383.5" r="0.45" fill="#D8203C" fill-opacity="0.85"/><circle cx="505.5" cy="388.8" r="0.45" fill="#D8203C" fill-opacity="0.85"/><circle cx="507.3" cy="388.3" r="0.45" fill="#D8203C" fill-opacity="0.85"/><circle cx="508.1" cy="383.9" r="0.45" fill="#D8203C" fill-opacity="0.85"/><circle cx="512.6" cy="387.9" r="0.45" fill="#D8203C" fill-opacity="0.85"/><circle cx="507.0" cy="385.2" r="0.45" fill="#D8203C" fill-opacity="0.85"/><circle cx="505.8" cy="387.9" r="0.45" fill="#D8203C" fill-opacity="0.85"/><circle cx="508.6" cy="389.1" r="0.45" fill="#D8203C" fill-opacity="0.85"/><circle cx="507.9" cy="384.8" r="0.45" fill="#D8203C" fill-opacity="0.85"/><circle cx="506.1" cy="379.4" r="0.45" fill="#D8203C" fill-opacity="0.85"/><circle cx="507.3" cy="386.5" r="0.45" fill="#D8203C" fill-opacity="0.85"/><circle cx="508.1" cy="383.2" r="0.45" fill="#D8203C" fill-opacity="0.85"/><circle cx="510.7" cy="376.0" r="0.45" fill="#D8203C" fill-opacity="0.85"/><circle cx="505.5" cy="384.9" r="0.45" fill="#D8203C" fill-opacity="0.85"/><circle cx="509.4" cy="383.1" r="0.45" fill="#D8203C" fill-opacity="0.85"/><circle cx="509.5" cy="379.7" r="0.45" fill="#D8203C" fill-opacity="0.85"/><circle cx="507.6" cy="385.8" r="0.45" fill="#D8203C" fill-opacity="0.85"/><circle cx="510.3" cy="388.4" r="0.45" fill="#D8203C" fill-opacity="0.85"/><circle cx="508.3" cy="386.5" r="0.45" fill="#D8203C" fill-opacity="0.85"/><circle cx="507.6" cy="382.8" r="0.45" fill="#D8203C" fill-opacity="0.85"/><circle cx="510.5" cy="384.5" r="0.45" fill="#D8203C" fill-opacity="0.85"/><circle cx="505.5" cy="373.0" r="0.45" fill="#D8203C" fill-opacity="0.85"/><circle cx="509.4" cy="386.7" r="0.45" fill="#D8203C" fill-opacity="0.85"/><circle cx="507.5" cy="386.1" r="0.45" fill="#D8203C" fill-opacity="0.85"/><circle cx="510.9" cy="384.5" r="0.45" fill="#D8203C" fill-opacity="0.85"/><circle cx="509.7" cy="388.5" r="0.45" fill="#D8203C" fill-opacity="0.85"/><circle cx="507.2" cy="387.7" r="0.45" fill="#D8203C" fill-opacity="0.85"/><circle cx="506.9" cy="379.4" r="0.45" fill="#D8203C" fill-opacity="0.85"/><circle cx="510.3" cy="388.7" r="0.45" fill="#D8203C" fill-opacity="0.85"/><circle cx="506.2" cy="384.9" r="0.45" fill="#D8203C" fill-opacity="0.85"/><circle cx="506.4" cy="383.3" r="0.45" fill="#D8203C" fill-opacity="0.85"/><circle cx="512.2" cy="384.5" r="0.45" fill="#D8203C" fill-opacity="0.85"/><circle cx="506.5" cy="377.6" r="0.45" fill="#D8203C" fill-opacity="0.85"/><circle cx="512.0" cy="388.6" r="0.45" fill="#D8203C" fill-opacity="0.85"/><circle cx="505.5" cy="380.8" r="0.45" fill="#D8203C" fill-opacity="0.85"/><circle cx="505.6" cy="381.0" r="0.45" fill="#D8203C" fill-opacity="0.85"/><circle cx="505.6" cy="385.7" r="0.45" fill="#D8203C" fill-opacity="0.85"/><circle cx="505.5" cy="387.1" r="0.45" fill="#D8203C" fill-opacity="0.85"/><circle cx="508.3" cy="378.5" r="0.45" fill="#D8203C" fill-opacity="0.85"/><circle cx="507.6" cy="375.6" r="0.45" fill="#D8203C" fill-opacity="0.85"/><circle cx="506.0" cy="383.5" r="0.45" fill="#D8203C" fill-opacity="0.85"/><circle cx="508.8" cy="386.5" r="0.45" fill="#D8203C" fill-opacity="0.85"/><circle cx="506.4" cy="380.3" r="0.45" fill="#D8203C" fill-opacity="0.85"/><circle cx="505.9" cy="378.5" r="0.45" fill="#D8203C" fill-opacity="0.85"/><circle cx="507.7" cy="388.1" r="0.45" fill="#D8203C" fill-opacity="0.85"/><circle cx="505.8" cy="388.3" r="0.45" fill="#D8203C" fill-opacity="0.85"/><circle cx="505.6" cy="383.7" r="0.45" fill="#D8203C" fill-opacity="0.85"/><circle cx="505.5" cy="382.5" r="0.45" fill="#D8203C" fill-opacity="0.85"/><circle cx="507.6" cy="384.6" r="0.45" fill="#D8203C" fill-opacity="0.85"/><circle cx="505.9" cy="372.9" r="0.45" fill="#D8203C" fill-opacity="0.85"/><circle cx="509.0" cy="380.8" r="0.45" fill="#D8203C" fill-opacity="0.85"/><circle cx="511.8" cy="386.5" r="0.45" fill="#D8203C" fill-opacity="0.85"/><circle cx="507.6" cy="375.2" r="0.45" fill="#D8203C" fill-opacity="0.85"/><circle cx="510.4" cy="384.6" r="0.45" fill="#D8203C" fill-opacity="0.85"/><circle cx="508.0" cy="386.4" r="0.45" fill="#D8203C" fill-opacity="0.85"/><circle cx="506.5" cy="379.0" r="0.45" fill="#D8203C" fill-opacity="0.85"/><circle cx="512.0" cy="381.5" r="0.45" fill="#D8203C" fill-opacity="0.85"/><circle cx="505.9" cy="387.8" r="0.45" fill="#D8203C" fill-opacity="0.85"/><circle cx="511.5" cy="378.5" r="0.45" fill="#D8203C" fill-opacity="0.85"/><circle cx="506.5" cy="385.8" r="0.45" fill="#D8203C" fill-opacity="0.85"/><circle cx="506.4" cy="388.8" r="0.45" fill="#D8203C" fill-opacity="0.85"/><circle cx="507.1" cy="379.3" r="0.45" fill="#D8203C" fill-opacity="0.85"/><circle cx="507.2" cy="377.6" r="0.45" fill="#D8203C" fill-opacity="0.85"/><circle cx="509.6" cy="385.2" r="0.45" fill="#D8203C" fill-opacity="0.85"/><circle cx="509.5" cy="378.7" r="0.45" fill="#D8203C" fill-opacity="0.85"/><circle cx="508.4" cy="374.9" r="0.45" fill="#D8203C" fill-opacity="0.85"/><circle cx="511.7" cy="383.1" r="0.45" fill="#D8203C" fill-opacity="0.85"/><circle cx="512.4" cy="380.0" r="0.45" fill="#D8203C" fill-opacity="0.85"/><circle cx="507.2" cy="386.0" r="0.45" fill="#D8203C" fill-opacity="0.85"/><circle cx="506.1" cy="387.9" r="0.45" fill="#D8203C" fill-opacity="0.85"/><circle cx="509.0" cy="378.0" r="0.45" fill="#D8203C" fill-opacity="0.85"/><circle cx="509.6" cy="378.7" r="0.45" fill="#D8203C" fill-opacity="0.85"/><circle cx="507.3" cy="384.7" r="0.45" fill="#D8203C" fill-opacity="0.85"/><circle cx="506.6" cy="387.2" r="0.45" fill="#D8203C" fill-opacity="0.85"/><circle cx="505.5" cy="384.1" r="0.45" fill="#D8203C" fill-opacity="0.85"/><circle cx="506.9" cy="382.1" r="0.45" fill="#D8203C" fill-opacity="0.85"/><circle cx="508.0" cy="388.4" r="0.45" fill="#D8203C" fill-opacity="0.85"/><circle cx="506.5" cy="377.6" r="0.45" fill="#D8203C" fill-opacity="0.85"/><circle cx="507.4" cy="384.3" r="0.45" fill="#D8203C" fill-opacity="0.85"/><circle cx="509.3" cy="387.2" r="0.45" fill="#D8203C" fill-opacity="0.85"/><circle cx="508.2" cy="380.8" r="0.45" fill="#D8203C" fill-opacity="0.85"/><circle cx="508.8" cy="387.7" r="0.45" fill="#D8203C" fill-opacity="0.85"/><circle cx="510.8" cy="384.2" r="0.45" fill="#D8203C" fill-opacity="0.85"/><circle cx="508.4" cy="379.6" r="0.45" fill="#D8203C" fill-opacity="0.85"/><circle cx="507.7" cy="388.0" r="0.45" fill="#D8203C" fill-opacity="0.85"/><circle cx="506.4" cy="386.7" r="0.45" fill="#D8203C" fill-opacity="0.85"/><circle cx="506.3" cy="385.1" r="0.45" fill="#D8203C" fill-opacity="0.85"/><circle cx="507.7" cy="389.2" r="0.45" fill="#D8203C" fill-opacity="0.85"/><circle cx="509.3" cy="389.0" r="0.45" fill="#D8203C" fill-opacity="0.85"/><circle cx="511.5" cy="388.5" r="0.45" fill="#D8203C" fill-opacity="0.85"/><circle cx="507.0" cy="381.2" r="0.45" fill="#D8203C" fill-opacity="0.85"/><circle cx="509.1" cy="377.6" r="0.45" fill="#D8203C" fill-opacity="0.85"/><circle cx="505.9" cy="384.1" r="0.45" fill="#D8203C" fill-opacity="0.85"/><circle cx="506.6" cy="380.8" r="0.45" fill="#D8203C" fill-opacity="0.85"/><circle cx="509.1" cy="382.4" r="0.45" fill="#D8203C" fill-opacity="0.85"/><circle cx="510.6" cy="382.8" r="0.45" fill="#D8203C" fill-opacity="0.85"/><circle cx="507.3" cy="376.7" r="0.45" fill="#D8203C" fill-opacity="0.85"/><circle cx="507.6" cy="384.1" r="0.45" fill="#D8203C" fill-opacity="0.85"/><circle cx="508.2" cy="384.8" r="0.45" fill="#D8203C" fill-opacity="0.85"/><circle cx="506.5" cy="387.2" r="0.45" fill="#D8203C" fill-opacity="0.85"/><circle cx="506.0" cy="388.1" r="0.45" fill="#D8203C" fill-opacity="0.85"/><circle cx="506.1" cy="383.6" r="0.45" fill="#D8203C" fill-opacity="0.85"/><circle cx="508.7" cy="384.1" r="0.45" fill="#D8203C" fill-opacity="0.85"/><circle cx="510.5" cy="378.5" r="0.45" fill="#D8203C" fill-opacity="0.85"/><circle cx="505.8" cy="380.9" r="0.45" fill="#D8203C" fill-opacity="0.85"/><circle cx="511.0" cy="386.7" r="0.45" fill="#D8203C" fill-opacity="0.85"/><circle cx="505.5" cy="378.4" r="0.45" fill="#D8203C" fill-opacity="0.85"/><circle cx="507.2" cy="383.8" r="0.45" fill="#D8203C" fill-opacity="0.85"/><circle cx="509.1" cy="377.2" r="0.45" fill="#D8203C" fill-opacity="0.85"/><circle cx="508.3" cy="378.7" r="0.45" fill="#D8203C" fill-opacity="0.85"/><circle cx="507.2" cy="382.1" r="0.45" fill="#D8203C" fill-opacity="0.85"/><circle cx="506.1" cy="379.4" r="0.45" fill="#D8203C" fill-opacity="0.85"/><circle cx="508.1" cy="383.3" r="0.45" fill="#D8203C" fill-opacity="0.85"/><circle cx="507.3" cy="385.5" r="0.45" fill="#D8203C" fill-opacity="0.85"/><circle cx="506.4" cy="383.3" r="0.45" fill="#D8203C" fill-opacity="0.85"/><circle cx="507.3" cy="375.4" r="0.45" fill="#D8203C" fill-opacity="0.85"/><circle cx="506.5" cy="385.6" r="0.45" fill="#D8203C" fill-opacity="0.85"/><circle cx="505.4" cy="382.5" r="0.45" fill="#D8203C" fill-opacity="0.85"/><circle cx="507.4" cy="388.6" r="0.45" fill="#D8203C" fill-opacity="0.85"/><circle cx="506.4" cy="384.9" r="0.45" fill="#D8203C" fill-opacity="0.85"/><circle cx="510.8" cy="387.3" r="0.45" fill="#D8203C" fill-opacity="0.85"/><circle cx="512.4" cy="377.7" r="0.45" fill="#D8203C" fill-opacity="0.85"/><circle cx="508.1" cy="384.8" r="0.45" fill="#D8203C" fill-opacity="0.85"/><circle cx="511.4" cy="387.8" r="0.45" fill="#D8203C" fill-opacity="0.85"/><circle cx="505.8" cy="381.2" r="0.45" fill="#D8203C" fill-opacity="0.85"/><circle cx="507.0" cy="379.1" r="0.45" fill="#D8203C" fill-opacity="0.85"/><circle cx="507.2" cy="386.0" r="0.45" fill="#D8203C" fill-opacity="0.85"/><circle cx="506.1" cy="387.9" r="0.45" fill="#D8203C" fill-opacity="0.85"/><circle cx="510.2" cy="381.3" r="0.45" fill="#D8203C" fill-opacity="0.85"/><circle cx="506.8" cy="380.9" r="0.45" fill="#D8203C" fill-opacity="0.85"/><circle cx="508.0" cy="383.0" r="0.45" fill="#D8203C" fill-opacity="0.85"/><circle cx="508.3" cy="381.3" r="0.45" fill="#D8203C" fill-opacity="0.85"/><circle cx="510.0" cy="382.3" r="0.45" fill="#D8203C" fill-opacity="0.85"/><circle cx="508.4" cy="384.9" r="0.45" fill="#D8203C" fill-opacity="0.85"/><circle cx="510.5" cy="383.6" r="0.45" fill="#D8203C" fill-opacity="0.85"/><circle cx="507.6" cy="386.6" r="0.45" fill="#D8203C" fill-opacity="0.85"/><circle cx="506.6" cy="374.0" r="0.45" fill="#D8203C" fill-opacity="0.85"/><circle cx="506.2" cy="377.7" r="0.45" fill="#D8203C" fill-opacity="0.85"/><circle cx="508.5" cy="380.1" r="0.45" fill="#D8203C" fill-opacity="0.85"/><circle cx="507.8" cy="382.8" r="0.45" fill="#D8203C" fill-opacity="0.85"/><circle cx="507.2" cy="379.5" r="0.45" fill="#D8203C" fill-opacity="0.85"/><circle cx="508.3" cy="384.7" r="0.45" fill="#D8203C" fill-opacity="0.85"/><circle cx="506.5" cy="377.6" r="0.45" fill="#D8203C" fill-opacity="0.85"/><circle cx="507.2" cy="385.1" r="0.45" fill="#D8203C" fill-opacity="0.85"/><circle cx="508.7" cy="385.4" r="0.45" fill="#D8203C" fill-opacity="0.85"/><circle cx="507.9" cy="383.9" r="0.45" fill="#D8203C" fill-opacity="0.85"/><circle cx="509.0" cy="373.8" r="0.45" fill="#D8203C" fill-opacity="0.85"/><circle cx="507.4" cy="379.2" r="0.45" fill="#D8203C" fill-opacity="0.85"/><circle cx="506.0" cy="381.9" r="0.45" fill="#D8203C" fill-opacity="0.85"/><circle cx="514.6" cy="387.9" r="0.45" fill="#D8203C" fill-opacity="0.85"/><circle cx="509.5" cy="387.0" r="0.45" fill="#D8203C" fill-opacity="0.85"/><circle cx="508.6" cy="378.1" r="0.45" fill="#D8203C" fill-opacity="0.85"/><circle cx="509.2" cy="385.9" r="0.45" fill="#D8203C" fill-opacity="0.85"/><circle cx="509.0" cy="383.4" r="0.45" fill="#D8203C" fill-opacity="0.85"/><circle cx="510.6" cy="386.2" r="0.45" fill="#D8203C" fill-opacity="0.85"/><circle cx="510.2" cy="388.4" r="0.45" fill="#D8203C" fill-opacity="0.85"/><circle cx="507.4" cy="381.2" r="0.45" fill="#D8203C" fill-opacity="0.85"/><circle cx="512.4" cy="379.5" r="0.45" fill="#D8203C" fill-opacity="0.85"/><circle cx="506.7" cy="378.2" r="0.45" fill="#D8203C" fill-opacity="0.85"/><circle cx="509.9" cy="381.2" r="0.45" fill="#D8203C" fill-opacity="0.85"/><circle cx="512.5" cy="374.1" r="0.45" fill="#D8203C" fill-opacity="0.85"/><circle cx="506.1" cy="387.2" r="0.45" fill="#D8203C" fill-opacity="0.85"/><circle cx="505.9" cy="381.7" r="0.45" fill="#D8203C" fill-opacity="0.85"/><circle cx="508.9" cy="388.5" r="0.45" fill="#D8203C" fill-opacity="0.85"/><circle cx="510.0" cy="383.6" r="0.45" fill="#D8203C" fill-opacity="0.85"/><circle cx="507.0" cy="384.5" r="0.45" fill="#D8203C" fill-opacity="0.85"/><circle cx="506.3" cy="377.0" r="0.45" fill="#D8203C" fill-opacity="0.85"/><circle cx="509.3" cy="385.8" r="0.45" fill="#D8203C" fill-opacity="0.85"/><circle cx="506.6" cy="376.0" r="0.45" fill="#D8203C" fill-opacity="0.85"/><circle cx="507.2" cy="385.9" r="0.45" fill="#D8203C" fill-opacity="0.85"/><circle cx="509.4" cy="379.8" r="0.45" fill="#D8203C" fill-opacity="0.85"/><circle cx="507.2" cy="379.3" r="0.45" fill="#D8203C" fill-opacity="0.85"/><circle cx="509.7" cy="387.3" r="0.45" fill="#D8203C" fill-opacity="0.85"/><circle cx="508.3" cy="380.7" r="0.45" fill="#D8203C" fill-opacity="0.85"/><circle cx="508.0" cy="376.7" r="0.45" fill="#D8203C" fill-opacity="0.85"/><circle cx="508.2" cy="388.0" r="0.45" fill="#D8203C" fill-opacity="0.85"/><circle cx="507.1" cy="388.0" r="0.45" fill="#D8203C" fill-opacity="0.85"/><circle cx="507.0" cy="383.1" r="0.45" fill="#D8203C" fill-opacity="0.85"/><circle cx="507.0" cy="384.4" r="0.45" fill="#D8203C" fill-opacity="0.85"/><circle cx="507.3" cy="385.2" r="0.45" fill="#D8203C" fill-opacity="0.85"/><circle cx="507.3" cy="387.0" r="0.45" fill="#D8203C" fill-opacity="0.85"/><circle cx="510.8" cy="389.0" r="0.45" fill="#D8203C" fill-opacity="0.85"/><circle cx="505.9" cy="383.7" r="0.45" fill="#D8203C" fill-opacity="0.85"/><circle cx="506.6" cy="381.1" r="0.45" fill="#D8203C" fill-opacity="0.85"/><circle cx="509.8" cy="384.6" r="0.45" fill="#D8203C" fill-opacity="0.85"/><circle cx="507.1" cy="383.2" r="0.45" fill="#D8203C" fill-opacity="0.85"/><circle cx="511.4" cy="382.8" r="0.45" fill="#D8203C" fill-opacity="0.85"/><circle cx="511.4" cy="384.3" r="0.45" fill="#D8203C" fill-opacity="0.85"/><circle cx="510.3" cy="381.9" r="0.45" fill="#D8203C" fill-opacity="0.85"/><circle cx="509.5" cy="378.3" r="0.45" fill="#D8203C" fill-opacity="0.85"/><circle cx="505.8" cy="388.2" r="0.45" fill="#D8203C" fill-opacity="0.85"/><circle cx="513.8" cy="387.9" r="0.45" fill="#D8203C" fill-opacity="0.85"/><circle cx="506.8" cy="384.5" r="0.45" fill="#D8203C" fill-opacity="0.85"/><circle cx="506.9" cy="386.7" r="0.45" fill="#D8203C" fill-opacity="0.85"/><circle cx="506.0" cy="376.3" r="0.45" fill="#D8203C" fill-opacity="0.85"/><circle cx="506.5" cy="385.7" r="0.45" fill="#D8203C" fill-opacity="0.85"/><circle cx="510.4" cy="381.7" r="0.45" fill="#D8203C" fill-opacity="0.85"/><circle cx="508.9" cy="375.5" r="0.45" fill="#D8203C" fill-opacity="0.85"/><circle cx="510.0" cy="381.0" r="0.45" fill="#D8203C" fill-opacity="0.85"/><circle cx="508.9" cy="375.4" r="0.45" fill="#D8203C" fill-opacity="0.85"/><circle cx="506.9" cy="375.3" r="0.45" fill="#D8203C" fill-opacity="0.85"/><circle cx="507.1" cy="378.3" r="0.45" fill="#D8203C" fill-opacity="0.85"/><circle cx="510.9" cy="386.8" r="0.45" fill="#D8203C" fill-opacity="0.85"/><circle cx="511.9" cy="383.4" r="0.45" fill="#D8203C" fill-opacity="0.85"/><circle cx="507.9" cy="387.2" r="0.45" fill="#D8203C" fill-opacity="0.85"/><circle cx="505.6" cy="385.1" r="0.45" fill="#D8203C" fill-opacity="0.85"/><circle cx="506.6" cy="389.1" r="0.45" fill="#D8203C" fill-opacity="0.85"/><circle cx="507.3" cy="388.3" r="0.45" fill="#D8203C" fill-opacity="0.85"/><circle cx="509.4" cy="388.7" r="0.45" fill="#D8203C" fill-opacity="0.85"/><circle cx="512.0" cy="385.5" r="0.45" fill="#D8203C" fill-opacity="0.85"/><circle cx="511.9" cy="388.6" r="0.45" fill="#D8203C" fill-opacity="0.85"/><circle cx="509.7" cy="387.3" r="0.45" fill="#D8203C" fill-opacity="0.85"/><circle cx="508.7" cy="376.8" r="0.45" fill="#D8203C" fill-opacity="0.85"/><circle cx="507.9" cy="383.7" r="0.45" fill="#D8203C" fill-opacity="0.85"/><circle cx="506.7" cy="388.5" r="0.45" fill="#D8203C" fill-opacity="0.85"/><circle cx="508.6" cy="381.1" r="0.45" fill="#D8203C" fill-opacity="0.85"/><circle cx="510.0" cy="387.4" r="0.45" fill="#D8203C" fill-opacity="0.85"/><circle cx="508.6" cy="373.4" r="0.45" fill="#D8203C" fill-opacity="0.85"/><circle cx="509.3" cy="388.6" r="0.45" fill="#D8203C" fill-opacity="0.85"/><circle cx="506.1" cy="388.0" r="0.45" fill="#D8203C" fill-opacity="0.85"/><circle cx="506.3" cy="378.9" r="0.45" fill="#D8203C" fill-opacity="0.85"/><circle cx="509.0" cy="376.5" r="0.45" fill="#D8203C" fill-opacity="0.85"/><circle cx="508.0" cy="382.9" r="0.45" fill="#D8203C" fill-opacity="0.85"/><circle cx="511.2" cy="387.1" r="0.45" fill="#D8203C" fill-opacity="0.85"/><circle cx="506.3" cy="381.4" r="0.45" fill="#D8203C" fill-opacity="0.85"/><circle cx="509.2" cy="384.7" r="0.45" fill="#D8203C" fill-opacity="0.85"/><circle cx="506.7" cy="383.7" r="0.45" fill="#D8203C" fill-opacity="0.85"/><circle cx="507.0" cy="382.5" r="0.45" fill="#D8203C" fill-opacity="0.85"/><circle cx="508.1" cy="389.1" r="0.45" fill="#D8203C" fill-opacity="0.85"/><circle cx="514.6" cy="388.4" r="0.45" fill="#D8203C" fill-opacity="0.85"/><circle cx="508.8" cy="378.2" r="0.45" fill="#D8203C" fill-opacity="0.85"/><circle cx="506.8" cy="383.5" r="0.45" fill="#D8203C" fill-opacity="0.85"/><circle cx="506.8" cy="379.7" r="0.45" fill="#D8203C" fill-opacity="0.85"/><circle cx="509.3" cy="379.4" r="0.45" fill="#D8203C" fill-opacity="0.85"/><circle cx="510.7" cy="386.2" r="0.45" fill="#D8203C" fill-opacity="0.85"/><circle cx="508.6" cy="383.0" r="0.45" fill="#D8203C" fill-opacity="0.85"/><circle cx="508.1" cy="387.3" r="0.45" fill="#D8203C" fill-opacity="0.85"/><circle cx="507.6" cy="389.0" r="0.45" fill="#D8203C" fill-opacity="0.85"/><circle cx="509.5" cy="384.3" r="0.45" fill="#D8203C" fill-opacity="0.85"/><circle cx="508.7" cy="378.1" r="0.45" fill="#D8203C" fill-opacity="0.85"/><circle cx="509.3" cy="383.7" r="0.45" fill="#D8203C" fill-opacity="0.85"/><circle cx="508.9" cy="382.2" r="0.45" fill="#D8203C" fill-opacity="0.85"/><circle cx="506.9" cy="379.7" r="0.45" fill="#D8203C" fill-opacity="0.85"/><circle cx="506.4" cy="384.5" r="0.45" fill="#D8203C" fill-opacity="0.85"/><circle cx="507.3" cy="382.0" r="0.45" fill="#D8203C" fill-opacity="0.85"/><circle cx="505.5" cy="385.7" r="0.45" fill="#D8203C" fill-opacity="0.85"/><circle cx="505.8" cy="387.3" r="0.45" fill="#D8203C" fill-opacity="0.85"/><circle cx="506.6" cy="372.8" r="0.45" fill="#D8203C" fill-opacity="0.85"/><circle cx="507.2" cy="383.2" r="0.45" fill="#D8203C" fill-opacity="0.85"/><circle cx="508.0" cy="377.4" r="0.45" fill="#D8203C" fill-opacity="0.85"/><circle cx="507.8" cy="387.0" r="0.45" fill="#D8203C" fill-opacity="0.85"/><circle cx="506.5" cy="381.8" r="0.45" fill="#D8203C" fill-opacity="0.85"/><circle cx="506.9" cy="382.0" r="0.45" fill="#D8203C" fill-opacity="0.85"/><circle cx="518.1" cy="384.4" r="0.38" fill="#D8203C" fill-opacity="0.6"/><circle cx="514.4" cy="382.7" r="0.38" fill="#D8203C" fill-opacity="0.6"/><circle cx="514.4" cy="375.2" r="0.38" fill="#D8203C" fill-opacity="0.6"/><circle cx="516.7" cy="379.0" r="0.38" fill="#D8203C" fill-opacity="0.6"/><circle cx="516.9" cy="382.5" r="0.38" fill="#D8203C" fill-opacity="0.6"/><circle cx="517.6" cy="381.2" r="0.38" fill="#D8203C" fill-opacity="0.6"/><circle cx="510.0" cy="383.4" r="0.38" fill="#D8203C" fill-opacity="0.6"/><circle cx="509.9" cy="379.0" r="0.38" fill="#D8203C" fill-opacity="0.6"/><circle cx="512.5" cy="382.8" r="0.38" fill="#D8203C" fill-opacity="0.6"/><circle cx="519.6" cy="382.3" r="0.38" fill="#D8203C" fill-opacity="0.6"/><circle cx="520.6" cy="387.9" r="0.38" fill="#D8203C" fill-opacity="0.6"/><circle cx="512.7" cy="382.8" r="0.38" fill="#D8203C" fill-opacity="0.6"/><circle cx="511.3" cy="377.9" r="0.38" fill="#D8203C" fill-opacity="0.6"/><circle cx="511.7" cy="378.4" r="0.38" fill="#D8203C" fill-opacity="0.6"/><circle cx="520.2" cy="385.0" r="0.38" fill="#D8203C" fill-opacity="0.6"/><circle cx="509.8" cy="371.3" r="0.38" fill="#D8203C" fill-opacity="0.6"/><circle cx="511.7" cy="379.7" r="0.38" fill="#D8203C" fill-opacity="0.6"/><circle cx="506.6" cy="375.6" r="0.38" fill="#D8203C" fill-opacity="0.6"/><circle cx="511.8" cy="381.2" r="0.38" fill="#D8203C" fill-opacity="0.6"/><circle cx="519.2" cy="382.8" r="0.38" fill="#D8203C" fill-opacity="0.6"/><circle cx="512.8" cy="379.9" r="0.38" fill="#D8203C" fill-opacity="0.6"/><circle cx="510.3" cy="382.2" r="0.38" fill="#D8203C" fill-opacity="0.6"/><circle cx="507.6" cy="387.4" r="0.38" fill="#D8203C" fill-opacity="0.6"/><circle cx="507.3" cy="388.1" r="0.38" fill="#D8203C" fill-opacity="0.6"/><circle cx="508.4" cy="377.8" r="0.38" fill="#D8203C" fill-opacity="0.6"/><circle cx="520.2" cy="378.7" r="0.38" fill="#D8203C" fill-opacity="0.6"/><circle cx="508.2" cy="380.1" r="0.38" fill="#D8203C" fill-opacity="0.6"/><circle cx="524.5" cy="387.6" r="0.38" fill="#D8203C" fill-opacity="0.6"/><circle cx="509.3" cy="372.0" r="0.38" fill="#D8203C" fill-opacity="0.6"/><circle cx="508.6" cy="388.6" r="0.38" fill="#D8203C" fill-opacity="0.6"/><circle cx="521.3" cy="380.5" r="0.38" fill="#D8203C" fill-opacity="0.6"/><circle cx="508.5" cy="379.1" r="0.38" fill="#D8203C" fill-opacity="0.6"/><circle cx="506.6" cy="388.0" r="0.38" fill="#D8203C" fill-opacity="0.6"/><circle cx="513.4" cy="377.7" r="0.38" fill="#D8203C" fill-opacity="0.6"/><circle cx="515.9" cy="382.0" r="0.38" fill="#D8203C" fill-opacity="0.6"/><circle cx="506.1" cy="385.5" r="0.38" fill="#D8203C" fill-opacity="0.6"/><circle cx="516.2" cy="371.3" r="0.38" fill="#D8203C" fill-opacity="0.6"/><circle cx="521.1" cy="384.8" r="0.38" fill="#D8203C" fill-opacity="0.6"/><circle cx="515.8" cy="371.6" r="0.38" fill="#D8203C" fill-opacity="0.6"/><circle cx="508.4" cy="380.0" r="0.38" fill="#D8203C" fill-opacity="0.6"/><circle cx="517.4" cy="373.8" r="0.38" fill="#D8203C" fill-opacity="0.6"/><circle cx="507.6" cy="370.6" r="0.38" fill="#D8203C" fill-opacity="0.6"/><circle cx="510.8" cy="383.9" r="0.38" fill="#D8203C" fill-opacity="0.6"/><circle cx="515.3" cy="380.3" r="0.38" fill="#D8203C" fill-opacity="0.6"/><circle cx="506.1" cy="376.8" r="0.38" fill="#D8203C" fill-opacity="0.6"/><circle cx="508.7" cy="382.8" r="0.38" fill="#D8203C" fill-opacity="0.6"/><circle cx="513.4" cy="376.0" r="0.38" fill="#D8203C" fill-opacity="0.6"/><circle cx="519.7" cy="387.3" r="0.38" fill="#D8203C" fill-opacity="0.6"/><circle cx="512.5" cy="378.0" r="0.38" fill="#D8203C" fill-opacity="0.6"/><circle cx="516.6" cy="377.5" r="0.38" fill="#D8203C" fill-opacity="0.6"/><circle cx="505.4" cy="383.1" r="0.38" fill="#D8203C" fill-opacity="0.6"/><circle cx="513.2" cy="385.4" r="0.38" fill="#D8203C" fill-opacity="0.6"/><circle cx="507.8" cy="387.5" r="0.38" fill="#D8203C" fill-opacity="0.6"/><circle cx="529.0" cy="360.0" r="0.3" fill="#C8909A" fill-opacity="0.45"/><circle cx="514.2" cy="331.7" r="0.3" fill="#C8909A" fill-opacity="0.45"/><circle cx="563.8" cy="351.4" r="0.3" fill="#C8909A" fill-opacity="0.45"/><circle cx="511.7" cy="367.0" r="0.3" fill="#C8909A" fill-opacity="0.45"/><circle cx="551.6" cy="338.4" r="0.3" fill="#C8909A" fill-opacity="0.45"/><circle cx="540.4" cy="349.7" r="0.3" fill="#C8909A" fill-opacity="0.45"/><circle cx="535.9" cy="330.2" r="0.3" fill="#C8909A" fill-opacity="0.45"/><circle cx="507.5" cy="388.4" r="0.3" fill="#C8909A" fill-opacity="0.45"/><circle cx="556.2" cy="358.2" r="0.3" fill="#C8909A" fill-opacity="0.45"/><circle cx="538.7" cy="344.7" r="0.3" fill="#C8909A" fill-opacity="0.45"/><circle cx="551.1" cy="354.6" r="0.3" fill="#C8909A" fill-opacity="0.45"/><circle cx="560.9" cy="375.0" r="0.3" fill="#C8909A" fill-opacity="0.45"/><circle cx="553.4" cy="386.8" r="0.3" fill="#C8909A" fill-opacity="0.45"/><circle cx="520.4" cy="331.3" r="0.3" fill="#C8909A" fill-opacity="0.45"/><circle cx="517.3" cy="339.8" r="0.3" fill="#C8909A" fill-opacity="0.45"/><circle cx="510.4" cy="332.1" r="0.3" fill="#C8909A" fill-opacity="0.45"/><circle cx="538.1" cy="381.2" r="0.3" fill="#C8909A" fill-opacity="0.45"/><circle cx="532.3" cy="385.8" r="0.3" fill="#C8909A" fill-opacity="0.45"/><circle cx="558.7" cy="332.9" r="0.3" fill="#C8909A" fill-opacity="0.45"/><circle cx="540.5" cy="352.8" r="0.3" fill="#C8909A" fill-opacity="0.45"/><circle cx="512.5" cy="386.6" r="0.3" fill="#C8909A" fill-opacity="0.45"/><circle cx="520.5" cy="362.9" r="0.3" fill="#C8909A" fill-opacity="0.45"/><circle cx="543.0" cy="386.4" r="0.3" fill="#C8909A" fill-opacity="0.45"/><circle cx="544.7" cy="352.6" r="0.3" fill="#C8909A" fill-opacity="0.45"/><circle cx="531.7" cy="338.6" r="0.3" fill="#C8909A" fill-opacity="0.45"/><circle cx="562.0" cy="388.5" r="0.3" fill="#C8909A" fill-opacity="0.45"/><circle cx="518.5" cy="331.3" r="0.3" fill="#C8909A" fill-opacity="0.45"/><circle cx="520.5" cy="350.1" r="0.3" fill="#C8909A" fill-opacity="0.45"/><circle cx="558.3" cy="383.3" r="0.3" fill="#C8909A" fill-opacity="0.45"/><circle cx="554.5" cy="331.8" r="0.3" fill="#C8909A" fill-opacity="0.45"/><circle cx="551.5" cy="371.6" r="0.3" fill="#C8909A" fill-opacity="0.45"/><circle cx="543.3" cy="388.1" r="0.3" fill="#C8909A" fill-opacity="0.45"/><circle cx="508.8" cy="337.7" r="0.3" fill="#C8909A" fill-opacity="0.45"/><circle cx="549.7" cy="385.4" r="0.3" fill="#C8909A" fill-opacity="0.45"/><circle cx="545.1" cy="346.9" r="0.3" fill="#C8909A" fill-opacity="0.45"/><circle cx="540.1" cy="374.5" r="0.3" fill="#C8909A" fill-opacity="0.45"/><circle cx="511.7" cy="348.4" r="0.3" fill="#C8909A" fill-opacity="0.45"/><circle cx="520.5" cy="336.4" r="0.3" fill="#C8909A" fill-opacity="0.45"/><circle cx="533.7" cy="339.1" r="0.3" fill="#C8909A" fill-opacity="0.45"/><circle cx="519.4" cy="337.6" r="0.3" fill="#C8909A" fill-opacity="0.45"/><circle cx="545.1" cy="329.8" r="0.3" fill="#C8909A" fill-opacity="0.45"/><circle cx="547.5" cy="340.7" r="0.3" fill="#C8909A" fill-opacity="0.45"/><circle cx="507.6" cy="384.7" r="0.3" fill="#C8909A" fill-opacity="0.45"/><circle cx="518.4" cy="385.0" r="0.3" fill="#C8909A" fill-opacity="0.45"/><circle cx="556.2" cy="382.3" r="0.3" fill="#C8909A" fill-opacity="0.45"/><circle cx="513.7" cy="355.8" r="0.3" fill="#C8909A" fill-opacity="0.45"/><circle cx="511.2" cy="384.7" r="0.3" fill="#C8909A" fill-opacity="0.45"/><circle cx="554.8" cy="366.7" r="0.3" fill="#C8909A" fill-opacity="0.45"/><circle cx="532.0" cy="349.4" r="0.3" fill="#C8909A" fill-opacity="0.45"/><circle cx="553.6" cy="357.7" r="0.3" fill="#C8909A" fill-opacity="0.45"/><circle cx="542.2" cy="337.6" r="0.3" fill="#C8909A" fill-opacity="0.45"/><circle cx="518.5" cy="332.4" r="0.3" fill="#C8909A" fill-opacity="0.45"/><circle cx="547.3" cy="362.2" r="0.3" fill="#C8909A" fill-opacity="0.45"/><circle cx="514.0" cy="381.2" r="0.3" fill="#C8909A" fill-opacity="0.45"/><circle cx="521.1" cy="353.7" r="0.3" fill="#C8909A" fill-opacity="0.45"/><circle cx="514.6" cy="345.3" r="0.3" fill="#C8909A" fill-opacity="0.45"/><circle cx="554.6" cy="349.1" r="0.3" fill="#C8909A" fill-opacity="0.45"/><circle cx="515.3" cy="358.5" r="0.3" fill="#C8909A" fill-opacity="0.45"/><circle cx="524.1" cy="383.2" r="0.3" fill="#C8909A" fill-opacity="0.45"/><circle cx="512.2" cy="387.7" r="0.3" fill="#C8909A" fill-opacity="0.45"/><circle cx="508.8" cy="382.7" r="0.3" fill="#C8909A" fill-opacity="0.45"/><circle cx="544.6" cy="341.7" r="0.3" fill="#C8909A" fill-opacity="0.45"/><circle cx="533.4" cy="346.2" r="0.3" fill="#C8909A" fill-opacity="0.45"/><circle cx="520.6" cy="341.1" r="0.3" fill="#C8909A" fill-opacity="0.45"/><circle cx="526.8" cy="388.5" r="0.3" fill="#C8909A" fill-opacity="0.45"/><circle cx="563.9" cy="384.5" r="0.3" fill="#C8909A" fill-opacity="0.45"/><circle cx="511.2" cy="346.4" r="0.3" fill="#C8909A" fill-opacity="0.45"/><circle cx="557.9" cy="332.4" r="0.3" fill="#C8909A" fill-opacity="0.45"/><circle cx="548.0" cy="346.6" r="0.3" fill="#C8909A" fill-opacity="0.45"/><circle cx="562.7" cy="330.0" r="0.3" fill="#C8909A" fill-opacity="0.45"/><circle cx="552.7" cy="349.5" r="0.3" fill="#C8909A" fill-opacity="0.45"/><circle cx="513.7" cy="329.1" r="0.3" fill="#C8909A" fill-opacity="0.45"/><circle cx="554.2" cy="360.6" r="0.3" fill="#C8909A" fill-opacity="0.45"/><circle cx="516.4" cy="355.1" r="0.3" fill="#C8909A" fill-opacity="0.45"/><circle cx="558.9" cy="342.1" r="0.3" fill="#C8909A" fill-opacity="0.45"/><circle cx="538.9" cy="337.3" r="0.3" fill="#C8909A" fill-opacity="0.45"/><circle cx="516.0" cy="375.2" r="0.3" fill="#C8909A" fill-opacity="0.45"/><circle cx="547.1" cy="340.8" r="0.3" fill="#C8909A" fill-opacity="0.45"/><circle cx="510.1" cy="334.2" r="0.3" fill="#C8909A" fill-opacity="0.45"/><circle cx="541.1" cy="358.7" r="0.3" fill="#C8909A" fill-opacity="0.45"/><circle cx="521.5" cy="341.4" r="0.3" fill="#C8909A" fill-opacity="0.45"/><circle cx="541.3" cy="371.5" r="0.3" fill="#C8909A" fill-opacity="0.45"/><circle cx="553.0" cy="364.0" r="0.3" fill="#C8909A" fill-opacity="0.45"/><circle cx="517.3" cy="332.9" r="0.3" fill="#C8909A" fill-opacity="0.45"/><circle cx="548.4" cy="353.5" r="0.3" fill="#C8909A" fill-opacity="0.45"/><circle cx="547.7" cy="332.3" r="0.3" fill="#C8909A" fill-opacity="0.45"/><circle cx="552.9" cy="349.1" r="0.3" fill="#C8909A" fill-opacity="0.45"/><circle cx="554.8" cy="380.9" r="0.3" fill="#C8909A" fill-opacity="0.45"/><circle cx="534.3" cy="329.9" r="0.3" fill="#C8909A" fill-opacity="0.45"/><circle cx="558.7" cy="357.6" r="0.3" fill="#C8909A" fill-opacity="0.45"/><circle cx="519.0" cy="360.4" r="0.3" fill="#C06070" fill-opacity="0.5"/><circle cx="508.4" cy="382.4" r="0.3" fill="#C06070" fill-opacity="0.5"/><circle cx="511.2" cy="356.4" r="0.3" fill="#C06070" fill-opacity="0.5"/><circle cx="511.3" cy="373.2" r="0.3" fill="#C06070" fill-opacity="0.5"/><circle cx="505.6" cy="370.3" r="0.3" fill="#C06070" fill-opacity="0.5"/><circle cx="512.4" cy="370.1" r="0.3" fill="#C06070" fill-opacity="0.5"/><circle cx="507.4" cy="377.9" r="0.3" fill="#C06070" fill-opacity="0.5"/><circle cx="518.2" cy="383.8" r="0.3" fill="#C06070" fill-opacity="0.5"/><circle cx="510.5" cy="377.7" r="0.3" fill="#C06070" fill-opacity="0.5"/><circle cx="511.4" cy="379.3" r="0.3" fill="#C06070" fill-opacity="0.5"/><circle cx="506.4" cy="384.0" r="0.3" fill="#C06070" fill-opacity="0.5"/><circle cx="520.3" cy="369.3" r="0.3" fill="#C06070" fill-opacity="0.5"/><circle cx="513.5" cy="370.7" r="0.3" fill="#C06070" fill-opacity="0.5"/><circle cx="513.8" cy="350.8" r="0.3" fill="#C06070" fill-opacity="0.5"/><circle cx="520.5" cy="358.7" r="0.3" fill="#C06070" fill-opacity="0.5"/><circle cx="508.3" cy="354.0" r="0.3" fill="#C06070" fill-opacity="0.5"/><circle cx="509.4" cy="381.9" r="0.3" fill="#C06070" fill-opacity="0.5"/><circle cx="506.0" cy="353.8" r="0.3" fill="#C06070" fill-opacity="0.5"/><circle cx="516.3" cy="357.6" r="0.3" fill="#C06070" fill-opacity="0.5"/><circle cx="505.8" cy="373.4" r="0.3" fill="#C06070" fill-opacity="0.5"/><circle cx="514.4" cy="370.4" r="0.3" fill="#C06070" fill-opacity="0.5"/><circle cx="516.4" cy="354.0" r="0.3" fill="#C06070" fill-opacity="0.5"/><circle cx="519.0" cy="378.0" r="0.3" fill="#C06070" fill-opacity="0.5"/><circle cx="506.2" cy="354.8" r="0.3" fill="#C06070" fill-opacity="0.5"/><circle cx="513.2" cy="369.5" r="0.3" fill="#C06070" fill-opacity="0.5"/><circle cx="509.8" cy="354.8" r="0.3" fill="#C06070" fill-opacity="0.5"/><circle cx="511.8" cy="355.3" r="0.3" fill="#C06070" fill-opacity="0.5"/><circle cx="514.7" cy="383.6" r="0.3" fill="#C06070" fill-opacity="0.5"/><circle cx="507.8" cy="372.3" r="0.3" fill="#C06070" fill-opacity="0.5"/><circle cx="517.1" cy="356.4" r="0.3" fill="#C06070" fill-opacity="0.5"/><circle cx="518.3" cy="386.6" r="0.3" fill="#C06070" fill-opacity="0.5"/><circle cx="511.5" cy="366.4" r="0.3" fill="#C06070" fill-opacity="0.5"/><circle cx="518.5" cy="370.5" r="0.3" fill="#C06070" fill-opacity="0.5"/><circle cx="511.6" cy="386.7" r="0.3" fill="#C06070" fill-opacity="0.5"/><circle cx="517.5" cy="363.2" r="0.3" fill="#C06070" fill-opacity="0.5"/><circle cx="509.2" cy="363.1" r="0.3" fill="#C06070" fill-opacity="0.5"/><circle cx="512.3" cy="388.3" r="0.3" fill="#C06070" fill-opacity="0.5"/><circle cx="518.0" cy="385.6" r="0.3" fill="#C06070" fill-opacity="0.5"/><circle cx="518.1" cy="383.1" r="0.3" fill="#C06070" fill-opacity="0.5"/><circle cx="506.3" cy="370.2" r="0.3" fill="#C06070" fill-opacity="0.5"/><circle cx="520.3" cy="386.4" r="0.3" fill="#C06070" fill-opacity="0.5"/><circle cx="509.4" cy="366.5" r="0.3" fill="#C06070" fill-opacity="0.5"/><circle cx="515.3" cy="364.2" r="0.3" fill="#C06070" fill-opacity="0.5"/><circle cx="513.7" cy="352.7" r="0.3" fill="#C06070" fill-opacity="0.5"/><circle cx="512.2" cy="369.7" r="0.3" fill="#C06070" fill-opacity="0.5"/><circle cx="505.8" cy="355.4" r="0.3" fill="#C06070" fill-opacity="0.5"/><circle cx="520.5" cy="380.3" r="0.3" fill="#C06070" fill-opacity="0.5"/><circle cx="520.0" cy="374.7" r="0.3" fill="#C06070" fill-opacity="0.5"/><circle cx="518.0" cy="384.5" r="0.3" fill="#C06070" fill-opacity="0.5"/><circle cx="519.2" cy="351.3" r="0.3" fill="#C06070" fill-opacity="0.5"/><g font-family="Liberation Sans, sans-serif"><text x="501.6" y="395.8" font-size="5.2" fill="#222">10<tspan dy="-2" font-size="3.4">0</tspan></text><path d="M504.8 389.6v1.4" stroke="#333" stroke-width="0.5"/><text x="518.1999999999999" y="395.8" font-size="5.2" fill="#222">10<tspan dy="-2" font-size="3.4">1</tspan></text><path d="M521.4 389.6v1.4" stroke="#333" stroke-width="0.5"/><text x="532.8" y="395.8" font-size="5.2" fill="#222">10<tspan dy="-2" font-size="3.4">2</tspan></text><path d="M536 389.6v1.4" stroke="#333" stroke-width="0.5"/><text x="547.1999999999999" y="395.8" font-size="5.2" fill="#222">10<tspan dy="-2" font-size="3.4">3</tspan></text><path d="M550.4 389.6v1.4" stroke="#333" stroke-width="0.5"/><text x="561.5999999999999" y="395.8" font-size="5.2" fill="#222">10<tspan dy="-2" font-size="3.4">4</tspan></text><path d="M564.8 389.6v1.4" stroke="#333" stroke-width="0.5"/><text transform="translate(502.6 392.8) rotate(-90)" font-size="5.2" fill="#222">10<tspan dy="-2" font-size="3.4">0</tspan></text><path d="M503.4 389.6h1.4" stroke="#333" stroke-width="0.5"/><text transform="translate(502.6 377.59999999999997) rotate(-90)" font-size="5.2" fill="#222">10<tspan dy="-2" font-size="3.4">1</tspan></text><path d="M503.4 374.4h1.4" stroke="#333" stroke-width="0.5"/><text transform="translate(502.6 361.2) rotate(-90)" font-size="5.2" fill="#222">10<tspan dy="-2" font-size="3.4">2</tspan></text><path d="M503.4 358h1.4" stroke="#333" stroke-width="0.5"/><text transform="translate(502.6 345.2) rotate(-90)" font-size="5.2" fill="#222">10<tspan dy="-2" font-size="3.4">3</tspan></text><path d="M503.4 342h1.4" stroke="#333" stroke-width="0.5"/><text transform="translate(502.6 331.4) rotate(-90)" font-size="5.2" fill="#222">10<tspan dy="-2" font-size="3.4">4</tspan></text><path d="M503.4 328.2h1.4" stroke="#333" stroke-width="0.5"/><text x="522.6" y="401.4" font-size="4.4" fill="#444">CD19 PerCP</text><text transform="translate(497 365.4) rotate(-90)" font-size="4.4" fill="#444">CD5 PE</text></g></svg>
<svg style="left:0;top:0" width="686" height="125"><g transform="translate(66.8 15.0) scale(0.88)"><path d="M-1.5 -4.4h3v4h1.9l-3.4 4.4-3.4-4.4h1.9z" fill="#72AAF0" stroke="#5A92E0" stroke-width="0.5"/></g><g transform="translate(78.5 15.0) scale(0.88)"><path d="M-1.5 4.4h3v-4h1.9l-3.4-4.4-3.4 4.4h1.9z" fill="#72AAF0" stroke="#5A92E0" stroke-width="0.5"/></g><g transform="translate(93.4 15.0) scale(0.88)"><path d="M-4 -4.2h5.4l2.6 2.4v6.2h-8z" fill="#FBFCF8" stroke="#7AA27E" stroke-width="0.8"/><path d="M-1.6 1.4a2 2 0 1 1 2.6 1.2" stroke="#4FA74F" stroke-width="0.9" fill="none"/><path d="M0.2 -1.6l1.6 0.2-1 1.4z" fill="#3C9A3C"/></g><g transform="translate(105.0 15.2) scale(0.88)"><circle r="3.4" fill="#1A1A1A"/><circle cx="1.2" cy="0.8" r="1.9" fill="#E8E6DC"/></g><g transform="translate(116.8 15.0) scale(0.88)"><rect x="-4" y="-4.2" width="8" height="8.4" fill="#5A625C"/><rect x="-2" y="-2.6" width="4.2" height="4.6" fill="#8A6E9A"/><rect x="-2.8" y="2.4" width="5.6" height="1" fill="#3C443E"/></g><g transform="translate(127.9 15.2) scale(0.88)"><rect x="-4" y="-3.6" width="8" height="7" fill="#3C6AD8" stroke="#2A4CB0" stroke-width="0.5"/><path d="M-3 2.6l2.2-3 1.6 1.6 1.2-1 1.2 2.4z" fill="#DCE8FA"/><rect x="-3" y="-2.8" width="6" height="1.6" fill="#8AB0F0"/></g><g transform="translate(141.2 15.0) scale(0.88)"><circle cx="-1" cy="-2.4" r="1.9" fill="#F0D468" stroke="#C8A030" stroke-width="0.4"/><path d="M-3.6 3.8c0-3.4 5.2-3.4 5.2 0z" fill="#E8C040"/><path d="M0.6 0.2l3 1.6-1.6 2.6z" fill="#E0A838"/></g><g transform="translate(152.8 15.2) scale(0.88)"><rect x="-4.4" y="-3" width="8.8" height="5" rx="1" fill="#6FA65C" stroke="#3E7A3A" stroke-width="0.6"/><path d="M-2.6 -0.6h1.8 M0.8 -0.6h1.8" stroke="#F0F6E8" stroke-width="1"/><path d="M-1 2l1 1.8 1-1.8z" fill="#3E7A3A"/></g><g transform="translate(167.5 15.2) scale(0.88)"><circle r="4" fill="#B9B8AE" stroke="#A3A298" stroke-width="0.5"/><rect x="-0.6" y="-2.4" width="1.2" height="3" fill="#EFEDE2"/><rect x="-0.6" y="1.4" width="1.2" height="1.1" fill="#EFEDE2"/></g><g transform="translate(72.8 108.6) scale(0.88)"><path d="M-3 -0.6a3.2 3.2 0 0 1 5.6-1.6 M3 0.6a3.2 3.2 0 0 1-5.6 1.6" stroke="#74ACEC" stroke-width="1.8" fill="none"/><path d="M1.4 -3.6l2.6 0.4-1.4 2.2z M-1.4 3.6l-2.6-0.4 1.4-2.2z" fill="#5890DC"/></g><g transform="translate(87.4 108.6) scale(0.88)"><path d="M-3.8 -3l1.2-1.2 6 5.4 0.6 2.4-2.4-0.8z" fill="#86C868" stroke="#5CA048" stroke-width="0.5"/></g><g transform="translate(99.6 108.6) scale(0.88)"><rect x="-3.8" y="-4" width="6.4" height="8" fill="#F4F8EE" stroke="#6FA060" stroke-width="0.7"/><path d="M-2.4 -1.8h3.4 M-2.4 0h3.4" stroke="#D49AA0" stroke-width="0.7"/><path d="M3.8 -3.6l0.8 0.9-4.6 5.6-1.6 0.6 0.4-1.6z" fill="#5CB04C" stroke="#3E8A36" stroke-width="0.4"/></g><g transform="translate(110.6 108.6) scale(0.88)"><path d="M3.8 -3l-1.2-1.2-6 5.4-0.6 2.4 2.4-0.8z" fill="#CFCDC0" stroke="#B5B3A6" stroke-width="0.5"/></g><g transform="translate(126.2 108.6) scale(0.88)"><rect x="-4" y="-4.2" width="5" height="6" fill="#FFFFFF" stroke="#2C48A8" stroke-width="0.9"/><rect x="-1" y="-1.6" width="5" height="6" fill="#DDE6FA" stroke="#2C48A8" stroke-width="0.9"/></g><g transform="translate(138.4 108.6) scale(0.88)"><rect x="-4" y="-4" width="5" height="5.6" fill="#DAD8CC" stroke="#A9A79A" stroke-width="0.8"/><circle cx="1" cy="1" r="2.8" fill="#D2D0C4" stroke="#A19F92" stroke-width="0.8"/></g><g transform="translate(149.8 108.6) scale(0.88)"><path d="M-3.4 -3.6h3 M-1.4 -1.2h4.6 M-1.4 1.2h4.6 M-1.4 3.6h4.6" stroke="#8F8D80" stroke-width="1.1"/><path d="M-2.8 -3v6.6" stroke="#8F8D80" stroke-width="0.6"/></g><g transform="translate(165.0 108.6) scale(0.88)"><path d="M-3.8 -3l1.2-1.2 6 5.4 0.6 2.4-2.4-0.8z" fill="#EED050" stroke="#C8A030" stroke-width="0.5"/></g><g transform="translate(179.6 108.6) scale(0.88)"><rect x="-3.8" y="-1.4" width="7.6" height="4.6" fill="#C9D3E6" stroke="#8A98B8" stroke-width="0.6"/><rect x="-2.4" y="-4" width="4.8" height="3" fill="#F8FAFE" stroke="#9AA6C2" stroke-width="0.5"/><rect x="-2" y="1.6" width="4" height="2.4" fill="#FFFFFF" stroke="#9AA6C2" stroke-width="0.4"/></g><g transform="translate(192.2 108.6) scale(0.88)"><path d="M-1.4 -2.6l3.2 2.6-3.2 2.6z" fill="#111"/></g><g transform="translate(206.6 108.6) scale(0.88)"><g transform="scale(1 1)"><path d="M-1.6 -2.2h2.4a2.6 2.6 0 0 1 0 5.2h-1.6" stroke="#A9A79A" stroke-width="1.2" fill="none"/><path d="M-4 -2.2l2.6-2.2v4.4z" fill="#A9A79A"/></g></g><g transform="translate(217.8 108.6) scale(0.88)"><g transform="scale(-1 1)"><path d="M-1.6 -2.2h2.4a2.6 2.6 0 0 1 0 5.2h-1.6" stroke="#A9A79A" stroke-width="1.2" fill="none"/><path d="M-4 -2.2l2.6-2.2v4.4z" fill="#A9A79A"/></g></g><g transform="translate(232.4 108.6) scale(0.88)"><path d="M-2.4 -4l4 6 M2.4 -4l-4 6" stroke="#A9A79A" stroke-width="0.9"/><circle cx="-2.2" cy="3" r="1.3" fill="none" stroke="#A9A79A" stroke-width="0.8"/><circle cx="2.2" cy="3" r="1.3" fill="none" stroke="#A9A79A" stroke-width="0.8"/></g><g transform="translate(244.6 108.6) scale(0.88)"><rect x="-4" y="-3.6" width="4.6" height="5.4" fill="#D6D4C8" stroke="#A9A79A" stroke-width="0.7"/><rect x="-1" y="-1.4" width="4.6" height="5.4" fill="#CFCDC0" stroke="#A19F92" stroke-width="0.7"/></g><g transform="translate(256.8 108.6) scale(0.88)"><rect x="-4" y="-3.4" width="7" height="7.4" fill="#BDBBAE" stroke="#9C9A8D" stroke-width="0.6"/><rect x="-1.2" y="-0.6" width="5.2" height="5" fill="#D6D4C8" stroke="#A19F92" stroke-width="0.6"/><rect x="-2" y="-4.4" width="3" height="1.6" fill="#A9A79A"/></g><text x="268.6" y="107.4" font-size="3.6" font-weight="bold" fill="#4A5870" font-family="Liberation Sans, sans-serif">ABC</text><g transform="translate(272.2 108.6) scale(0.88)"><path d="M-2 1.6l1.6 2 3.4-3.8" stroke="#D03030" stroke-width="1.1" fill="none"/></g><g transform="translate(423.4 97.6) scale(0.88)"><path d="M-4 -4.2h5.4l2.6 2.4v6.2h-8z" fill="#FBFCF8" stroke="#7AA27E" stroke-width="0.8"/><path d="M-1.6 1.4a2 2 0 1 1 2.6 1.2" stroke="#4FA74F" stroke-width="0.9" fill="none"/><path d="M0.2 -1.6l1.6 0.2-1 1.4z" fill="#3C9A3C"/></g><g transform="translate(438.2 97.6) scale(0.88)"><path d="M-3.4 0.6l2 2.6 4.6-6.6" stroke="#B9B7AA" stroke-width="1.2" fill="none"/></g><g transform="translate(450.2 97.6) scale(0.88)"><path d="M-3.6 -2.6l2.4-1 1 2.4 M-1 -1.6l4 5" stroke="#B9B7AA" stroke-width="1" fill="none"/><path d="M1.6 -3.4l0.8 1.6" stroke="#B9B7AA" stroke-width="0.8"/></g><g transform="translate(462.0 97.6) scale(0.88)"><path d="M-4 -4l2.2 0.4 6 6.2-1.6 1.6-6.2-6z" fill="#5A4A46" stroke="#3A2E2C" stroke-width="0.4"/><path d="M-1.4 -1.2l4 4" stroke="#C85048" stroke-width="1"/><path d="M-4 -4l1.6 0.2-1.2 1.2z" fill="#E0C070"/></g><g transform="translate(477.0 97.6) scale(0.88)"><path d="M-3.4 -3.6h5.4v3.6h-5.4z" fill="#C3C1B4"/><path d="M-0.6 0.4l3.6 3.4" stroke="#C3C1B4" stroke-width="1.2"/></g><g transform="translate(488.6 97.6) scale(0.88)"><path d="M-3.4 -3.6h5.4v3.6h-5.4z" fill="#CCCABE"/><path d="M-0.6 0.4l3.6 3.4" stroke="#CCCABE" stroke-width="1.2"/></g><g transform="translate(500.0 97.8) scale(0.88)"><rect x="-4" y="-1.4" width="8" height="5.2" fill="#4A524E"/><rect x="0.4" y="-3.8" width="3.4" height="2.6" fill="#5A625C"/><rect x="-3" y="-0.2" width="3.6" height="1.6" fill="#C8CEC8"/><path d="M-3 -2.6h2.6" stroke="#4A524E" stroke-width="1"/></g><g transform="translate(515.2 97.6) scale(0.88)"><rect x="-4" y="-4.2" width="5" height="6" fill="#FFFFFF" stroke="#2C48A8" stroke-width="0.9"/><rect x="-1" y="-1.6" width="5" height="6" fill="#DDE6FA" stroke="#2C48A8" stroke-width="0.9"/></g><g transform="translate(527.4 97.6) scale(0.88)"><rect x="-4" y="-4" width="5" height="5.6" fill="#DAD8CC" stroke="#A9A79A" stroke-width="0.8"/><circle cx="1" cy="1" r="2.8" fill="#D2D0C4" stroke="#A19F92" stroke-width="0.8"/></g><g transform="translate(539.0 97.6) scale(0.88)"><path d="M-3.4 -3.6h3 M-1.4 -1.2h4.6 M-1.4 1.2h4.6 M-1.4 3.6h4.6" stroke="#A9A79A" stroke-width="1.1"/><path d="M-2.8 -3v6.6" stroke="#A9A79A" stroke-width="0.6"/></g><g transform="translate(550.6 97.6) scale(0.88)"><path d="M-3.4 -4.6h4.4l2 2v7.2h-6.4z" fill="#FCFCF6" stroke="#8E8C80" stroke-width="0.6"/><rect x="-2.4" y="-3.8" width="3" height="2" fill="#4A4E60"/><circle cx="1.6" cy="2.2" r="2.2" fill="#EEE060"/><path d="M-2.4 0h3 M-2.4 1.6h2" stroke="#B0AEA2" stroke-width="0.6"/></g><g transform="translate(562.6 97.6) scale(0.88)"><circle cx="-0.8" cy="-2.6" r="1.8" fill="#F2D89A" stroke="#D8B060" stroke-width="0.4"/><path d="M-3.6 3.6c0-3.6 5.6-3.6 5.6 0z" fill="#F0CC78"/><circle cx="2.4" cy="2.4" r="1.6" fill="#E8B850"/></g><g transform="translate(577.0 97.6) scale(0.88)"><g transform="scale(1 1)"><path d="M-1.6 -2.2h2.4a2.6 2.6 0 0 1 0 5.2h-1.6" stroke="#C5C3B8" stroke-width="1.2" fill="none"/><path d="M-4 -2.2l2.6-2.2v4.4z" fill="#C5C3B8"/></g></g><g transform="translate(590.0 98.0) scale(0.88)"><path d="M-3.8 -1.6h7.6l-3 3v3l-1.6-1v-2z" fill="#3A8ACC" stroke="#2A6AA8" stroke-width="0.4"/><path d="M-3.4 -4.2h2.2v1.4h-2.2z" fill="#A8A69A"/></g><g transform="translate(601.4 97.6) scale(0.88)"><path d="M-3.4 0.6l2 2.6 4.6-6.6" stroke="#C4242E" stroke-width="1.5" fill="none"/></g><g transform="translate(613.0 97.6) scale(0.88)"><circle cx="0.4" cy="0.6" r="3.2" fill="#D8ECF6" stroke="#3C92C4" stroke-width="1.3"/><path d="M-1.2 0.6l1.2 1.4 2.4-3" stroke="#2A6EA0" stroke-width="0.9" fill="none"/><path d="M-3.8 -4.2h2.2v1.4h-2.2z" fill="#A8A69A"/></g><g transform="translate(625.6 98.0) scale(0.88)"><path d="M-3.8 -1.6h7.6l-3 3v3l-1.6-1v-2z" fill="#C2D2E4" stroke="#A8BCD2" stroke-width="0.4"/><path d="M-3.4 -4.2h2.2v1.4h-2.2z" fill="#A8A69A"/></g><g transform="translate(640.2 97.6) scale(0.88)"><path d="M-3.8 -3.6h3.4v7.4h-3.4z M0.4 -3.6c2.4 0 3.4 1 3.4 3s-1.2 4-3.4 4.4z" fill="#BDBBAE" stroke="#A5A396" stroke-width="0.6"/></g><g transform="translate(652.2 97.6) scale(0.88)"><ellipse cx="0.4" cy="-1.2" rx="3.4" ry="2.4" fill="#BDBBAE" stroke="#A5A396" stroke-width="0.6"/><path d="M-3.6 1.6h7 M-3.6 3.4h7" stroke="#A5A396" stroke-width="0.9"/></g><g transform="translate(667.0 97.6) scale(0.88)"><rect x="-4.2" y="-4" width="5.4" height="5" rx="1.6" fill="#F8F7F0" stroke="#3A3A36" stroke-width="0.8" transform="rotate(-20)"/><rect x="-1" y="-0.8" width="5.4" height="5" rx="1.6" fill="#F8F7F0" stroke="#3A3A36" stroke-width="0.8" transform="rotate(-20)"/></g></svg>
</div></body></html>
